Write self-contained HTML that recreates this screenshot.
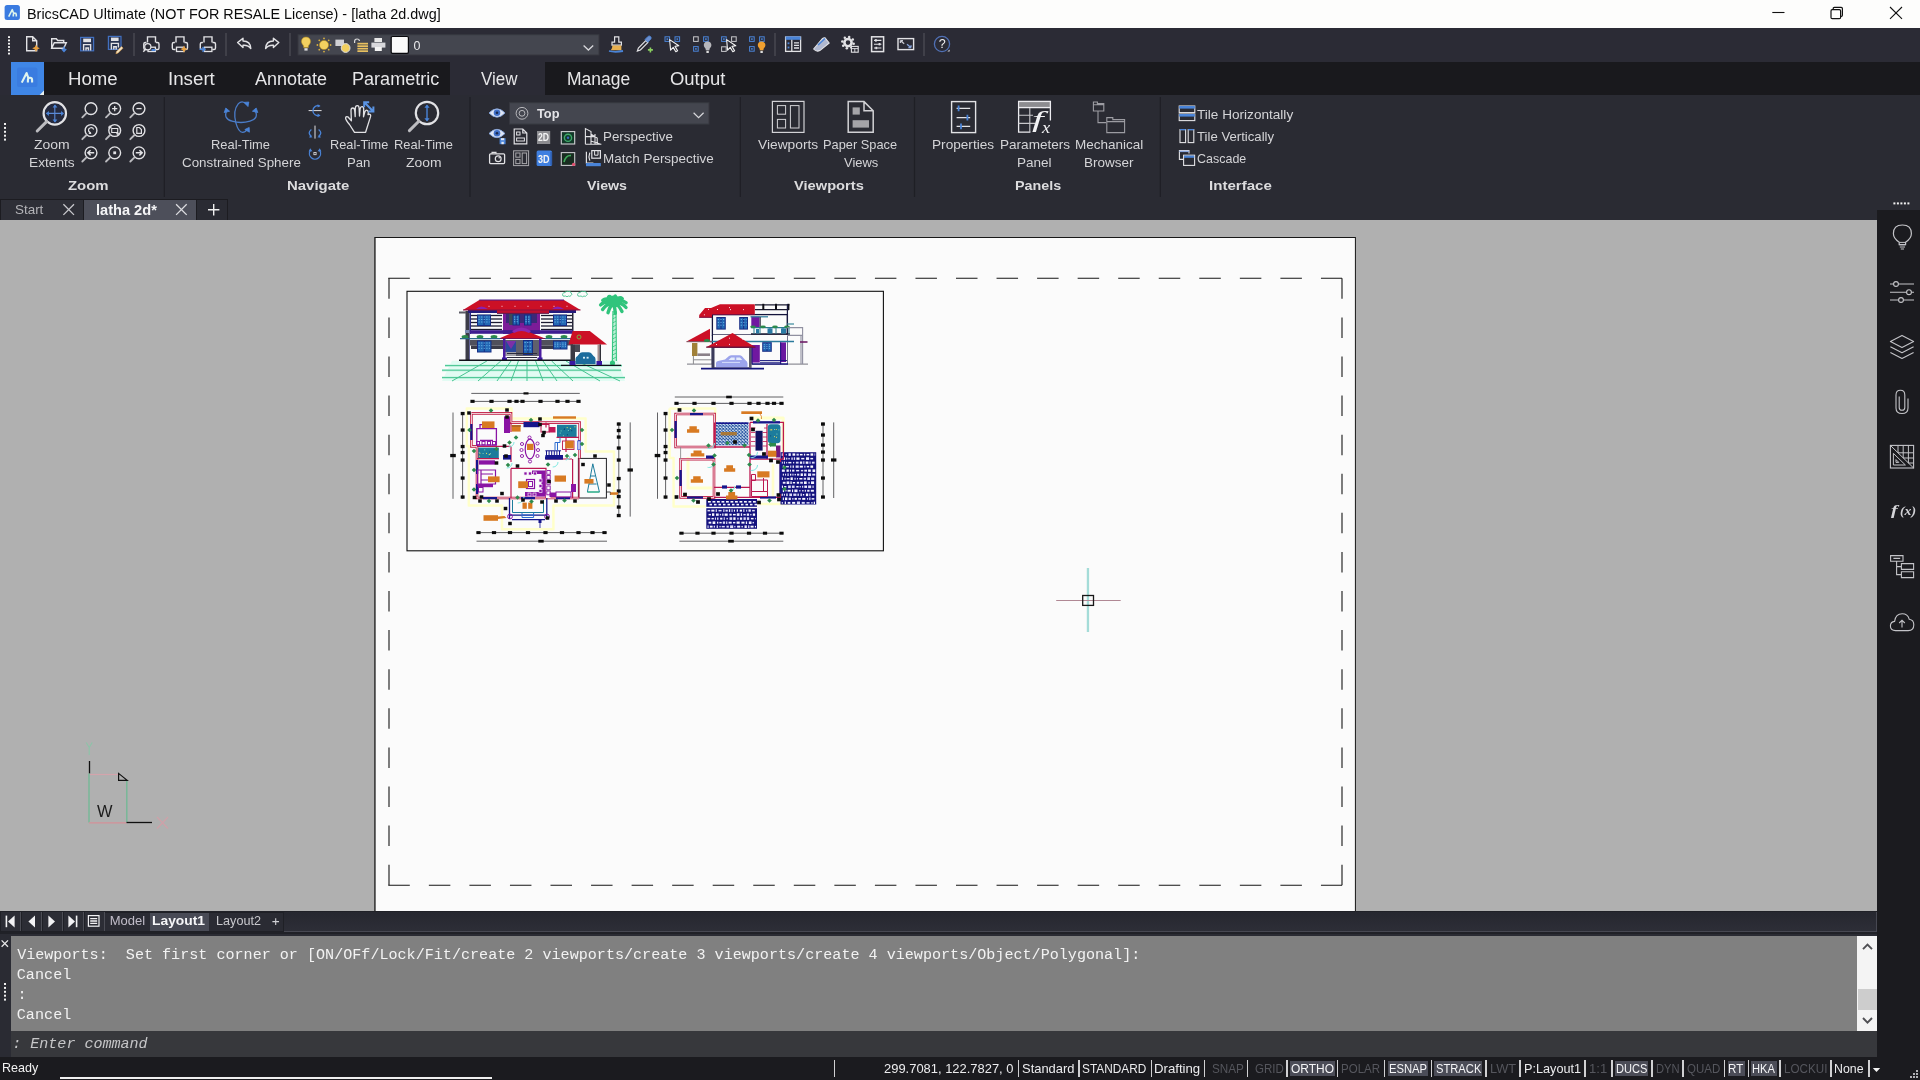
<!DOCTYPE html>
<html>
<head>
<meta charset="utf-8">
<title>BricsCAD Ultimate - latha 2d.dwg</title>
<style>
*{box-sizing:border-box;margin:0;padding:0}
html,body{width:1920px;height:1080px;overflow:hidden;background:#2a2b33;font-family:"Liberation Sans",sans-serif;}
.abs{position:absolute}
.t{position:absolute;white-space:nowrap;display:block}
.ov{position:absolute;left:0;top:0;pointer-events:none}
#titlebar{position:absolute;left:0;top:0;width:1920px;height:28px;background:#fdfdfc;}
#toolbar{position:absolute;left:0;top:28px;width:1920px;height:34px;background:#2b2b35;}
#tabrow{position:absolute;left:0;top:62px;width:1920px;height:34px;background:#2b2b35;}
#tabdark1{position:absolute;left:44px;top:0;width:406px;height:33px;background:#19191d;}
#tabdark2{position:absolute;left:545px;top:0;width:1375px;height:33px;background:#19191d;}
#ribbon{position:absolute;left:0;top:95px;width:1920px;height:105px;background:#2a2b33;}
#doctabs{position:absolute;left:0;top:200px;width:1920px;height:20px;background:#2a2b33;}
#canvas{position:absolute;left:0;top:220px;width:1877px;height:691px;background:#b0b0b0;overflow:hidden}
#rightpanel{position:absolute;left:1877px;top:210px;width:43px;height:870px;background:#1b1b1f;}
#layouttabs{position:absolute;left:0;top:911px;width:1877px;height:21px;background:#2a2b33;}
#cmdpanel{position:absolute;left:0;top:932px;width:1877px;height:125px;background:#2a2b33;}
#cmdhist{position:absolute;left:11px;top:4px;width:1846px;height:95px;background:#808080;}
#cmdscroll{position:absolute;left:1857px;top:4px;width:20px;height:95px;background:#f4f4f4;}
#cmdline{position:absolute;left:11px;top:99px;width:1866px;height:26px;background:#37383c;}
#statusbar{position:absolute;left:0;top:1057px;width:1920px;height:23px;background:#1b1b1f;}
</style>
</head>
<body>
<div id="titlebar"></div>
<div id="toolbar"></div>
<div id="tabrow"><div id="tabdark1"></div><div id="tabdark2"></div></div>
<div id="ribbon"></div>
<div id="doctabs"><div class="abs" style="left:0;top:-1px;width:228px;height:21px;background:#1c1c21"></div><div class="abs" style="left:1px;top:0;width:82px;height:20px;background:#2e2f37"></div><div class="abs" style="left:84px;top:0;width:112px;height:20px;background:#4d4f5a"></div><div class="abs" style="left:197px;top:0;width:30px;height:20px;background:#2a2b33"></div></div>
<div id="canvas"><svg width="1877" height="691" viewBox="0 220 1877 691" style="position:absolute;left:0;top:0"><rect x="374.3" y="237.0" width="981.6" height="675.0" fill="#181818" /><rect x="375.6" y="238.0" width="979.3" height="674.0" fill="#fbfbfb" /><path d="M388.3 278.3 H1342" stroke="#161616" stroke-width="1.1" stroke-dasharray="21.5 19.05" fill="none"/><path d="M388.3 885.2 H1342" stroke="#161616" stroke-width="1.1" stroke-dasharray="21.5 19.05" fill="none"/><path d="M389 278.3 V885.2" stroke="#161616" stroke-width="1.1" stroke-dasharray="20.5 18.59" fill="none"/><path d="M1342 278.3 V885.2" stroke="#161616" stroke-width="1.1" stroke-dasharray="20.5 18.59" fill="none"/><rect x="407.0" y="291.3" width="476.4" height="259.5" fill="none" stroke="#101010" stroke-width="1.1"/><path d="M452 360.800 H618 L625 381 H442z" fill="#e2fbf3"/><g stroke="#c8f4e4" stroke-width="2.6" fill="none"><path d="M445 365.6 H622"/><path d="M442 370.2 H621"/><path d="M442 377.6 H625"/></g><g stroke="#46c490" stroke-width="1" fill="none"><path d="M445 365.6 H622"/><path d="M442 370.2 H621"/><path d="M442 377.6 H625"/><path d="M486.9 361 L452.0 381"/><path d="M500.8 361 L478.0 381"/><path d="M511.0 361 L497.0 381"/><path d="M518.4 361 L511.0 381"/><path d="M527.0 361 L527.0 381"/><path d="M535.6 361 L543.0 381"/><path d="M543.0 361 L557.0 381"/><path d="M551.6 361 L573.0 381"/><path d="M566.0 361 L600.0 381"/><path d="M576.7 361 L620.0 381"/></g><path d="M563 296 q-1.5-3 2-3.500 q1-2 3.500-1 q2.500-.5 2.500 1.500 q2 1 0 2.500 q-1 1.500-2.500 .5 q-1.500 1.500-3 0 q-2 .5-2.500 0z" fill="none" stroke="#46c490" stroke-width="0.9" /><path d="M578 296 q-1.500-3 2-3.500 q1-2 3.500-1 q3-.5 3 1.500 q2 1 0 2.500 q-1 1.500-2.500 .5 q-1.500 1.500-3 0 q-2 .5-3 0z" fill="none" stroke="#46c490" stroke-width="0.9" /><path d="M612.200 311 h4.400 l.6 50 h-5.600z" fill="#bff0d8"/><path d="M613 311 L612.400 361 M616 311 L616.400 361" fill="none" stroke="#30c47c" stroke-width="1" /><path d="M612.6 315.0 L616.2 313.0" stroke="#30c47c" stroke-width="0.8"/><path d="M612.6 319.0 L616.2 317.0" stroke="#30c47c" stroke-width="0.8"/><path d="M612.6 323.0 L616.2 321.0" stroke="#30c47c" stroke-width="0.8"/><path d="M612.6 327.0 L616.2 325.0" stroke="#30c47c" stroke-width="0.8"/><path d="M612.6 331.0 L616.2 329.0" stroke="#30c47c" stroke-width="0.8"/><path d="M612.6 335.0 L616.2 333.0" stroke="#30c47c" stroke-width="0.8"/><path d="M612.6 339.0 L616.2 337.0" stroke="#30c47c" stroke-width="0.8"/><path d="M612.6 343.0 L616.2 341.0" stroke="#30c47c" stroke-width="0.8"/><path d="M612.6 347.0 L616.2 345.0" stroke="#30c47c" stroke-width="0.8"/><path d="M612.6 351.0 L616.2 349.0" stroke="#30c47c" stroke-width="0.8"/><path d="M612.6 355.0 L616.2 353.0" stroke="#30c47c" stroke-width="0.8"/><path d="M612.6 359.0 L616.2 357.0" stroke="#30c47c" stroke-width="0.8"/><circle cx="612.500" cy="363" r="2.600" fill="#30c47c"/><path d="M613.600 303 Q621.2 301.8 626.0 307.5" stroke="#30c47c" stroke-width="3.400" fill="none" stroke-linecap="round"/><path d="M613.600 303 Q618.8 304.6 622.0 311.5" stroke="#30c47c" stroke-width="3.400" fill="none" stroke-linecap="round"/><path d="M613.600 303 Q614.6 306.0 615.3 313.4" stroke="#30c47c" stroke-width="3.400" fill="none" stroke-linecap="round"/><path d="M613.600 303 Q610.2 305.4 608.0 312.7" stroke="#30c47c" stroke-width="3.400" fill="none" stroke-linecap="round"/><path d="M613.600 303 Q606.8 303.2 602.6 309.5" stroke="#30c47c" stroke-width="3.400" fill="none" stroke-linecap="round"/><path d="M613.600 303 Q605.6 299.9 600.6 304.9" stroke="#30c47c" stroke-width="3.400" fill="none" stroke-linecap="round"/><path d="M613.600 303 Q606.9 296.7 602.8 300.3" stroke="#30c47c" stroke-width="3.400" fill="none" stroke-linecap="round"/><path d="M613.600 303 Q610.4 294.5 608.4 297.2" stroke="#30c47c" stroke-width="3.400" fill="none" stroke-linecap="round"/><path d="M613.600 303 Q614.9 294.1 615.6 296.6" stroke="#30c47c" stroke-width="3.400" fill="none" stroke-linecap="round"/><path d="M613.600 303 Q618.9 295.5 622.3 298.7" stroke="#30c47c" stroke-width="3.400" fill="none" stroke-linecap="round"/><path d="M613.600 303 Q621.3 298.4 626.1 302.7" stroke="#30c47c" stroke-width="3.400" fill="none" stroke-linecap="round"/><ellipse cx="613.600" cy="301.500" rx="8" ry="6" fill="#30c47c"/><rect x="466.0" y="312.0" width="107.0" height="22.0" fill="#fbfbfb" /><path d="M470.0 315.5 L502.0 315.5" stroke="#1a1a30" stroke-width="1.3"/><path d="M541.0 315.5 L572.5 315.5" stroke="#1a1a30" stroke-width="1.3"/><path d="M470.0 319.0 L502.0 319.0" stroke="#1a1a30" stroke-width="1.3"/><path d="M541.0 319.0 L572.5 319.0" stroke="#1a1a30" stroke-width="1.3"/><path d="M470.0 322.5 L502.0 322.5" stroke="#1a1a30" stroke-width="1.3"/><path d="M541.0 322.5 L572.5 322.5" stroke="#1a1a30" stroke-width="1.3"/><path d="M470.0 326.0 L502.0 326.0" stroke="#1a1a30" stroke-width="1.3"/><path d="M541.0 326.0 L572.5 326.0" stroke="#1a1a30" stroke-width="1.3"/><path d="M470.0 329.5 L502.0 329.5" stroke="#1a1a30" stroke-width="1.3"/><path d="M541.0 329.5 L572.5 329.5" stroke="#1a1a30" stroke-width="1.3"/><rect x="465.5" y="311.0" width="4.0" height="49.0" fill="#3c3c48" /><rect x="469.5" y="311.0" width="1.5" height="49.0" fill="#2a2a8a" /><rect x="572.0" y="312.0" width="1.5" height="22.0" fill="#28283a" /><rect x="468.0" y="309.5" width="108.0" height="3.5" fill="#241c7c" /><path d="M503 313 h37 v22 h-37z" fill="#7c1c98"/><path d="M506 313 h31 v10 h-31z" fill="#3c2878"/><rect x="509.0" y="313.5" width="6.0" height="11.5" fill="#3a4a58" /><rect x="477.0" y="314.5" width="14.0" height="11.5" fill="#162c84" /><rect x="478.0" y="315.5" width="5.5" height="9.5" fill="#2268b4" /><rect x="484.5" y="315.5" width="5.5" height="9.5" fill="#2268b4" /><path d="M478.5 317.0 H489.5" stroke="#7cc4f4" stroke-width=".8" stroke-dasharray="1.200 1.400"/><path d="M478.5 319.5 H489.5" stroke="#7cc4f4" stroke-width=".8" stroke-dasharray="1.200 1.400"/><path d="M478.5 322.0 H489.5" stroke="#7cc4f4" stroke-width=".8" stroke-dasharray="1.200 1.400"/><rect x="512.5" y="314.5" width="7.5" height="11.0" fill="#162c84" /><rect x="513.5" y="315.5" width="2.2" height="9.0" fill="#2268b4" /><rect x="516.8" y="315.5" width="2.2" height="9.0" fill="#2268b4" /><path d="M514.0 317.0 H518.5" stroke="#7cc4f4" stroke-width=".8" stroke-dasharray="1.200 1.400"/><path d="M514.0 319.3 H518.5" stroke="#7cc4f4" stroke-width=".8" stroke-dasharray="1.200 1.400"/><path d="M514.0 321.7 H518.5" stroke="#7cc4f4" stroke-width=".8" stroke-dasharray="1.200 1.400"/><rect x="524.0" y="314.5" width="7.5" height="11.0" fill="#162c84" /><rect x="525.0" y="315.5" width="2.2" height="9.0" fill="#2268b4" /><rect x="528.2" y="315.5" width="2.2" height="9.0" fill="#2268b4" /><path d="M525.5 317.0 H530.0" stroke="#7cc4f4" stroke-width=".8" stroke-dasharray="1.200 1.400"/><path d="M525.5 319.3 H530.0" stroke="#7cc4f4" stroke-width=".8" stroke-dasharray="1.200 1.400"/><path d="M525.5 321.7 H530.0" stroke="#7cc4f4" stroke-width=".8" stroke-dasharray="1.200 1.400"/><rect x="553.0" y="314.5" width="14.0" height="11.5" fill="#162c84" /><rect x="554.0" y="315.5" width="5.5" height="9.5" fill="#2268b4" /><rect x="560.5" y="315.5" width="5.5" height="9.5" fill="#2268b4" /><path d="M554.5 317.0 H565.5" stroke="#7cc4f4" stroke-width=".8" stroke-dasharray="1.200 1.400"/><path d="M554.5 319.5 H565.5" stroke="#7cc4f4" stroke-width=".8" stroke-dasharray="1.200 1.400"/><path d="M554.5 322.0 H565.5" stroke="#7cc4f4" stroke-width=".8" stroke-dasharray="1.200 1.400"/><rect x="470.0" y="330.2" width="103.0" height="3.6" fill="#3e1c90" /><path d="M479.300 300 H564 L580.500 310 H463z" fill="#cc1026"/><path d="M497 309.500 H549 V313.400 H497z" fill="#c01030"/><path d="M497.0 313.4 L549.0 313.4" stroke="#5a1a4a" stroke-width="0.9"/><path d="M479.3 300.0 L564.0 300.0" stroke="#4a1a8a" stroke-width="1.2"/><path d="M463.0 310.0 L580.5 310.0" stroke="#8a1040" stroke-width="1"/><path d="M476 309 q5-5 12 0z" fill="#8a20b0"/><path d="M552 309 q5-5 12 0z" fill="#8a20b0"/><rect x="488.5" y="305.8" width="1.0" height="1.0" fill="#f8d0e0" /><rect x="501.5" y="305.8" width="1.0" height="1.0" fill="#f8d0e0" /><rect x="514.5" y="305.8" width="1.0" height="1.0" fill="#f8d0e0" /><rect x="527.5" y="305.8" width="1.0" height="1.0" fill="#f8d0e0" /><rect x="540.5" y="305.8" width="1.0" height="1.0" fill="#f8d0e0" /><rect x="553.5" y="305.8" width="1.0" height="1.0" fill="#f8d0e0" /><rect x="566.5" y="305.8" width="1.0" height="1.0" fill="#f8d0e0" /><rect x="470.0" y="334.0" width="103.0" height="26.0" fill="#fbfbfb" /><rect x="470.0" y="340.0" width="103.0" height="5.5" fill="#50505c" /><rect x="471.0" y="345.5" width="32.0" height="3.5" fill="#3c3c48" /><rect x="541.0" y="345.5" width="15.0" height="3.5" fill="#3c3c48" /><rect x="477.0" y="340.5" width="14.5" height="12.0" fill="#162c84" /><rect x="478.0" y="341.5" width="5.8" height="10.0" fill="#2268b4" /><rect x="484.8" y="341.5" width="5.8" height="10.0" fill="#2268b4" /><path d="M478.5 343.0 H490.0" stroke="#7cc4f4" stroke-width=".8" stroke-dasharray="1.200 1.400"/><path d="M478.5 345.7 H490.0" stroke="#7cc4f4" stroke-width=".8" stroke-dasharray="1.200 1.400"/><path d="M478.5 348.3 H490.0" stroke="#7cc4f4" stroke-width=".8" stroke-dasharray="1.200 1.400"/><rect x="553.0" y="340.5" width="14.5" height="9.0" fill="#162c84" /><rect x="554.0" y="341.5" width="5.8" height="7.0" fill="#2268b4" /><rect x="560.8" y="341.5" width="5.8" height="7.0" fill="#2268b4" /><path d="M554.5 343.0 H566.0" stroke="#7cc4f4" stroke-width=".8" stroke-dasharray="1.200 1.400"/><path d="M554.5 344.7 H566.0" stroke="#7cc4f4" stroke-width=".8" stroke-dasharray="1.200 1.400"/><path d="M554.5 346.3 H566.0" stroke="#7cc4f4" stroke-width=".8" stroke-dasharray="1.200 1.400"/><rect x="503.5" y="339.0" width="37.5" height="21.0" fill="#fbfbfb" /><rect x="505.0" y="340.0" width="35.0" height="16.0" fill="#60606c" /><rect x="506.0" y="341.0" width="10.0" height="11.0" fill="#2a4a9c" /><rect x="523.0" y="340.0" width="10.0" height="15.0" fill="#162c84" /><rect x="524.0" y="341.0" width="3.5" height="13.0" fill="#2268b4" /><rect x="528.5" y="341.0" width="3.5" height="13.0" fill="#2268b4" /><path d="M524.5 342.5 H531.5" stroke="#7cc4f4" stroke-width=".8" stroke-dasharray="1.200 1.400"/><path d="M524.5 346.2 H531.5" stroke="#7cc4f4" stroke-width=".8" stroke-dasharray="1.200 1.400"/><path d="M524.5 349.8 H531.5" stroke="#7cc4f4" stroke-width=".8" stroke-dasharray="1.200 1.400"/><rect x="505.0" y="352.0" width="11.0" height="4.0" fill="#a0a0a8" /><path d="M506 341 l5 8 5-8z" fill="#7c30a8"/><rect x="503.0" y="339.0" width="2.5" height="22.0" fill="#4a1ca0" /><rect x="539.0" y="339.0" width="2.5" height="22.0" fill="#4a1ca0" /><rect x="502.0" y="357.5" width="5.0" height="3.5" fill="#3a18a0" /><rect x="537.5" y="357.5" width="5.0" height="3.5" fill="#3a18a0" /><path d="M507.0 353.5 L537.0 353.5" stroke="#2c2c3c" stroke-width="1"/><path d="M507.0 357.5 L537.0 357.5" stroke="#2c2c3c" stroke-width="1"/><path d="M521.500 329 L545 338.500 H499z" fill="#cc1026"/><path d="M512 331 q9.500-7 19 0 l-2 2 q-7.500-4-15 0z" fill="#8c28b0"/><path d="M499.0 338.5 L545.0 338.5" stroke="#7a1450" stroke-width="1.2"/><ellipse cx="465" cy="336.800" rx="3.400" ry="1.900" fill="#2c8a4c"/><ellipse cx="480" cy="336.800" rx="3.400" ry="1.900" fill="#2c8a4c"/><ellipse cx="494" cy="336.800" rx="3.400" ry="1.900" fill="#2c8a4c"/><ellipse cx="549" cy="336.800" rx="3.400" ry="1.900" fill="#2c8a4c"/><ellipse cx="564" cy="336.800" rx="3.400" ry="1.900" fill="#2c8a4c"/><path d="M460.0 338.6 L500.0 338.6" stroke="#2a6a8c" stroke-width="1.2"/><path d="M545.0 338.6 L572.0 338.6" stroke="#2a6a8c" stroke-width="1.2"/><path d="M459.0 360.3 L573.0 360.3" stroke="#101018" stroke-width="1.5"/><path d="M561.0 365.3 L621.0 365.3" stroke="#101018" stroke-width="1.3"/><path d="M572.700 331 H589.800 L607 344.400 H568.500z" fill="#cc1026"/><circle cx="579" cy="337" r="2" fill="none" stroke="#7ab040" stroke-width="1"/><rect x="570.5" y="344.4" width="4.5" height="19.6" fill="#3a3a44" /><rect x="575.0" y="344.4" width="5.0" height="7.6" fill="#4a4a54" /><rect x="597.5" y="344.4" width="2.0" height="19.6" fill="#a89090" /><rect x="599.5" y="344.4" width="1.5" height="19.6" fill="#303038" /><rect x="569.5" y="361.0" width="6.0" height="4.0" fill="#3a18a0" /><rect x="596.5" y="361.0" width="5.5" height="4.0" fill="#3a18a0" /><path d="M575.500 364 v-5 q0-2 2-3 l2.500-3 q1-.8 2.500-.8 h6 q1.500 0 2.500.8 l2.500 3 q2 1 2 3 v5z" fill="#1c6c9c"/><rect x="583.0" y="356.8" width="2.0" height="1.8" fill="#d8ecf4" /><rect x="586.6" y="356.8" width="2.0" height="1.8" fill="#d8ecf4" /><rect x="459.0" y="311.5" width="7.0" height="2.0" fill="#5a5a64" /><rect x="465.0" y="330.0" width="4.0" height="3.0" fill="#7a8ab0" /><path d="M687.0 364.2 L808.0 364.2" stroke="#909098" stroke-width="1.2"/><path d="M701.0 368.6 L764.0 368.6" stroke="#14147c" stroke-width="1.8"/><rect x="712.4" y="314.6" width="75.0" height="20.4" fill="#fbfbfb" stroke="#14143c" stroke-width="1.3"/><path d="M755.0 304.8 L789.5 304.8" stroke="#1a1a30" stroke-width="1.3"/><path d="M755.0 309.6 L789.0 309.6" stroke="#1a1a30" stroke-width="1.3"/><rect x="762.3" y="303.8" width="2.0" height="6.2" fill="#101018" /><rect x="775.0" y="303.8" width="2.0" height="6.2" fill="#101018" /><rect x="787.4" y="303.8" width="2.0" height="6.2" fill="#101018" /><path d="M787.4 304.0 L787.4 364.0" stroke="#1a1a40" stroke-width="1.2"/><path d="M720 304.200 H754.800 V314.600 H712 V317.600 H699.200 V315 L705 308 H711z" fill="#cc1026"/><path d="M712.0 314.6 L754.8 314.6" stroke="#7a1040" stroke-width="1"/><path d="M699.2 317.3 L712.0 317.3" stroke="#7a1040" stroke-width="1"/><rect x="717.0" y="309.0" width="1.0" height="1.0" fill="#f8e0e8" /><rect x="729.0" y="307.1" width="1.0" height="1.0" fill="#f8e0e8" /><rect x="730.0" y="309.1" width="1.0" height="1.0" fill="#f8e0e8" /><rect x="743.0" y="309.1" width="1.0" height="1.0" fill="#f8e0e8" /><rect x="708.0" y="308.9" width="1.0" height="1.0" fill="#f8e0e8" /><rect x="703.9" y="314.3" width="1.0" height="1.0" fill="#f8e0e8" /><rect x="716.3" y="317.0" width="9.5" height="12.6" fill="#162c84" /><rect x="717.3" y="318.0" width="3.2" height="10.6" fill="#2268b4" /><rect x="721.5" y="318.0" width="3.2" height="10.6" fill="#2268b4" /><path d="M717.8 319.5 H724.3" stroke="#7cc4f4" stroke-width=".8" stroke-dasharray="1.200 1.400"/><path d="M717.8 322.4 H724.3" stroke="#7cc4f4" stroke-width=".8" stroke-dasharray="1.200 1.400"/><path d="M717.8 325.2 H724.3" stroke="#7cc4f4" stroke-width=".8" stroke-dasharray="1.200 1.400"/><rect x="739.2" y="317.0" width="8.8" height="12.6" fill="#162c84" /><rect x="740.2" y="318.0" width="2.9" height="10.6" fill="#2268b4" /><rect x="744.1" y="318.0" width="2.9" height="10.6" fill="#2268b4" /><path d="M740.7 319.5 H746.5" stroke="#7cc4f4" stroke-width=".8" stroke-dasharray="1.200 1.400"/><path d="M740.7 322.4 H746.5" stroke="#7cc4f4" stroke-width=".8" stroke-dasharray="1.200 1.400"/><path d="M740.7 325.2 H746.5" stroke="#7cc4f4" stroke-width=".8" stroke-dasharray="1.200 1.400"/><rect x="751.3" y="316.6" width="8.3" height="10.4" fill="#7018a0" /><rect x="750.5" y="316.2" width="17.5" height="1.2" fill="#2a7a9c" /><rect x="759.6" y="317.0" width="1.2" height="10.0" fill="#3a3a4a" /><path d="M751.0 327.6 L790.0 327.6" stroke="#2a7a8c" stroke-width="1.2"/><path d="M751.0 334.0 L790.0 334.0" stroke="#1a1a30" stroke-width="1.6"/><path d="M754.0 327.6 L754.0 334.0" stroke="#2a7a8c" stroke-width="1"/><path d="M760.0 327.6 L760.0 334.0" stroke="#2a7a8c" stroke-width="1"/><path d="M770.0 327.6 L770.0 334.0" stroke="#2a7a8c" stroke-width="1"/><path d="M776.0 327.6 L776.0 334.0" stroke="#2a7a8c" stroke-width="1"/><path d="M783.0 327.6 L783.0 334.0" stroke="#2a7a8c" stroke-width="1"/><path d="M789.0 327.6 L789.0 334.0" stroke="#2a7a8c" stroke-width="1"/><rect x="767.5" y="328.4" width="5.0" height="5.1" fill="#2a7aa4" /><rect x="781.0" y="328.4" width="5.0" height="5.1" fill="#2a7aa4" /><rect x="756.0" y="329.0" width="3.0" height="4.5" fill="#2a7aa4" /><ellipse cx="753" cy="326.800" rx="2.800" ry="1.400" fill="#2c8a4c"/><ellipse cx="763" cy="326.800" rx="2.800" ry="1.400" fill="#2c8a4c"/><ellipse cx="775" cy="326.800" rx="2.800" ry="1.400" fill="#2c8a4c"/><ellipse cx="787" cy="326.800" rx="2.800" ry="1.400" fill="#2c8a4c"/><rect x="787.0" y="323.4" width="7.0" height="1.2" fill="#3a8a9c" /><path d="M787.400 327.600 H802.600 V364 M787.400 335.400 H802.600 M801 335.400 V364" fill="none" stroke="#9090a0" stroke-width="1.1" /><rect x="800.0" y="341.2" width="7.5" height="1.6" fill="#702068" /><rect x="712.4" y="335.0" width="75.0" height="29.0" fill="#fbfbfb" /><path d="M712.4 335.0 L712.4 364.0" stroke="#14143c" stroke-width="1.2"/><path d="M710.0 341.6 L794.0 341.6" stroke="#2a7a9c" stroke-width="1.5"/><rect x="762.2" y="342.2" width="9.6" height="9.6" fill="#162c84" /><rect x="763.2" y="343.2" width="3.3" height="7.6" fill="#2268b4" /><rect x="767.5" y="343.2" width="3.3" height="7.6" fill="#2268b4" /><path d="M763.7 344.7 H770.3" stroke="#7cc4f4" stroke-width=".8" stroke-dasharray="1.200 1.400"/><path d="M763.7 346.6 H770.3" stroke="#7cc4f4" stroke-width=".8" stroke-dasharray="1.200 1.400"/><path d="M763.7 348.4 H770.3" stroke="#7cc4f4" stroke-width=".8" stroke-dasharray="1.200 1.400"/><rect x="751.2" y="345.0" width="8.6" height="17.6" fill="#7018a0" /><rect x="751.2" y="345.0" width="1.6" height="19.0" fill="#3a1890" /><rect x="780.0" y="342.4" width="6.0" height="19.6" fill="#6a18a0" /><rect x="780.0" y="342.4" width="1.2" height="21.6" fill="#2a1888" /><path d="M760.0 360.6 L787.0 360.6" stroke="#14147c" stroke-width="1"/><path d="M752.0 364.0 L788.0 364.0" stroke="#14147c" stroke-width="1.3"/><path d="M760.0 362.4 L780.0 362.4" stroke="#14147c" stroke-width="0.8"/><path d="M686.500 341.400 L710 328.800 V341.400z" fill="#cc1026"/><path d="M686.5 341.6 L712.0 341.6" stroke="#8a5060" stroke-width="1.2"/><rect x="692.0" y="343.0" width="5.4" height="13.0" fill="#a08038" /><rect x="697.4" y="353.4" width="12.6" height="2.6" fill="#8a8088" /><path d="M693.400 356 V364 M693.400 359.800 H712" fill="none" stroke="#8c8c90" stroke-width="1" /><ellipse cx="707" cy="340.600" rx="3" ry="1.500" fill="#2c8a4c"/><rect x="713.0" y="347.2" width="37.5" height="20.8" fill="#fbfbfb" stroke="#1c1c6c" stroke-width="1.4"/><rect x="711.5" y="347.2" width="3.0" height="20.8" fill="#3a3a5a" /><rect x="749.0" y="347.2" width="2.5" height="20.8" fill="#5a5a6a" /><path d="M716 367 v-4 q0-1.600 2-2 l7-1.500 l4-3.500 q1-.8 2.500-.8 h8 q1.500 0 2.500 1 l3 3.500 q2.500 1.500 2.500 3.500 v3.800z" fill="#9ca4ec"/><path d="M728.500 360 l2.600-2.600 h3.600 v2.600z M736.300 357.400 h3.600 l2.400 2.600 h-6z" fill="#e4ecfc"/><path d="M722.0 362.4 L740.0 362.4" stroke="#dce4fc" stroke-width="0.9"/><path d="M732.500 333 L755.500 347.200 H706.200z" fill="#cc1026"/><path d="M706.2 347.2 L755.5 347.2" stroke="#6a1038" stroke-width="1.3"/><rect x="729.0" y="337.7" width="1.0" height="1.0" fill="#f8e0e8" /><rect x="716.0" y="344.0" width="1.0" height="1.0" fill="#f8e0e8" /><rect x="729.0" y="343.9" width="1.0" height="1.0" fill="#f8e0e8" /><rect x="742.5" y="339.0" width="1.0" height="1.0" fill="#f8e0e8" /><path d="M466.800 408.500 H511.600 V418.600 H585.600 V451.400 H614 V505.600 H553.400 V529.200 H502 V505.600 H468.800 V446 H466.800z" fill="none" stroke="#ffffca" stroke-width="2.5" stroke-linejoin="round"/><path d="M471.3 393.4 L579.8 393.4" stroke="#505054" stroke-width="0.9"/><rect x="523.5" y="392.3" width="5.0" height="2.2" fill="#0c0c0c" /><path d="M471.3 401.4 L579.8 401.4" stroke="#505054" stroke-width="0.9"/><rect x="470.4" y="399.8" width="4.2" height="3.1" fill="#0c0c0c" /><rect x="489.4" y="399.8" width="4.2" height="3.1" fill="#0c0c0c" /><rect x="507.4" y="399.8" width="4.2" height="3.1" fill="#0c0c0c" /><rect x="514.4" y="399.8" width="4.2" height="3.1" fill="#0c0c0c" /><rect x="520.4" y="399.8" width="4.2" height="3.1" fill="#0c0c0c" /><rect x="538.4" y="399.8" width="4.2" height="3.1" fill="#0c0c0c" /><rect x="555.4" y="399.8" width="4.2" height="3.1" fill="#0c0c0c" /><rect x="565.4" y="399.8" width="4.2" height="3.1" fill="#0c0c0c" /><rect x="576.4" y="399.8" width="4.2" height="3.1" fill="#0c0c0c" /><path d="M453.0 412.5 L453.0 498.8" stroke="#505054" stroke-width="0.9"/><rect x="450.2" y="453.9" width="5.6" height="3.3" fill="#0c0c0c" /><path d="M462.6 412.5 L462.6 498.8" stroke="#505054" stroke-width="0.9"/><rect x="460.7" y="411.9" width="3.9" height="3.3" fill="#0c0c0c" /><rect x="460.7" y="428.4" width="3.9" height="3.3" fill="#0c0c0c" /><rect x="460.7" y="444.9" width="3.9" height="3.3" fill="#0c0c0c" /><rect x="460.7" y="450.9" width="3.9" height="3.3" fill="#0c0c0c" /><rect x="460.7" y="458.4" width="3.9" height="3.3" fill="#0c0c0c" /><rect x="460.7" y="476.4" width="3.9" height="3.3" fill="#0c0c0c" /><rect x="460.7" y="495.4" width="3.9" height="3.3" fill="#0c0c0c" /><path d="M618.8 422.4 L618.8 516.4" stroke="#505054" stroke-width="0.9"/><rect x="616.8" y="422.4" width="3.9" height="3.3" fill="#0c0c0c" /><rect x="616.8" y="428.9" width="3.9" height="3.3" fill="#0c0c0c" /><rect x="616.8" y="435.4" width="3.9" height="3.3" fill="#0c0c0c" /><rect x="616.8" y="446.4" width="3.9" height="3.3" fill="#0c0c0c" /><rect x="616.8" y="458.4" width="3.9" height="3.3" fill="#0c0c0c" /><rect x="616.8" y="476.9" width="3.9" height="3.3" fill="#0c0c0c" /><rect x="616.8" y="489.4" width="3.9" height="3.3" fill="#0c0c0c" /><rect x="616.8" y="494.9" width="3.9" height="3.3" fill="#0c0c0c" /><rect x="616.8" y="505.4" width="3.9" height="3.3" fill="#0c0c0c" /><rect x="616.8" y="513.9" width="3.9" height="3.3" fill="#0c0c0c" /><path d="M630.2 422.4 L630.2 516.6" stroke="#505054" stroke-width="0.9"/><rect x="627.5" y="468.4" width="5.4" height="3.2" fill="#0c0c0c" /><path d="M476.7 532.6 L606.5 532.6" stroke="#505054" stroke-width="0.9"/><rect x="476.4" y="531.1" width="4.2" height="3.0" fill="#0c0c0c" /><rect x="491.9" y="531.1" width="4.2" height="3.0" fill="#0c0c0c" /><rect x="507.9" y="531.1" width="4.2" height="3.0" fill="#0c0c0c" /><rect x="525.9" y="531.1" width="4.2" height="3.0" fill="#0c0c0c" /><rect x="543.4" y="531.1" width="4.2" height="3.0" fill="#0c0c0c" /><rect x="559.9" y="531.1" width="4.2" height="3.0" fill="#0c0c0c" /><rect x="576.4" y="531.1" width="4.2" height="3.0" fill="#0c0c0c" /><rect x="590.4" y="531.1" width="4.2" height="3.0" fill="#0c0c0c" /><rect x="602.4" y="531.1" width="4.2" height="3.0" fill="#0c0c0c" /><path d="M476.5 541.2 L607.0 541.2" stroke="#505054" stroke-width="0.9"/><rect x="538.3" y="539.8" width="5.4" height="2.8" fill="#0c0c0c" /><rect x="578.4" y="458.4" width="28.0" height="39.6" fill="none" stroke="#202024" stroke-width="1"/><path d="M606.400 492 l4 0 0 3" fill="none" stroke="#141414" stroke-width="0.8" /><rect x="477.6" y="447.6" width="21.2" height="10.6" fill="#1c7c9c" /><rect x="557.0" y="424.8" width="19.6" height="12.2" fill="#1c7c9c" /><rect x="484.2" y="449.4" width="1.0" height="1.0" fill="#7cd0c0" /><rect x="479.4" y="452.8" width="1.0" height="1.0" fill="#e0e060" /><rect x="489.1" y="456.2" width="1.0" height="1.0" fill="#14508c" /><rect x="478.7" y="451.9" width="1.0" height="1.0" fill="#7cd0c0" /><rect x="482.6" y="453.0" width="1.0" height="1.0" fill="#7cd0c0" /><rect x="493.7" y="449.1" width="1.0" height="1.0" fill="#14508c" /><rect x="490.0" y="453.2" width="1.0" height="1.0" fill="#7cd0c0" /><rect x="489.0" y="451.6" width="1.0" height="1.0" fill="#14508c" /><rect x="478.9" y="455.7" width="1.0" height="1.0" fill="#e0e060" /><rect x="486.0" y="452.9" width="1.0" height="1.0" fill="#e0e060" /><rect x="488.6" y="454.1" width="1.0" height="1.0" fill="#7cd0c0" /><rect x="489.1" y="453.8" width="1.0" height="1.0" fill="#e0e060" /><rect x="559.7" y="432.6" width="1.0" height="1.0" fill="#7cd0c0" /><rect x="568.5" y="430.5" width="1.0" height="1.0" fill="#0c3c6c" /><rect x="571.2" y="430.2" width="1.0" height="1.0" fill="#0c3c6c" /><rect x="564.1" y="428.0" width="1.0" height="1.0" fill="#14508c" /><rect x="569.9" y="427.9" width="1.0" height="1.0" fill="#e0e060" /><rect x="566.9" y="434.3" width="1.0" height="1.0" fill="#0c3c6c" /><rect x="562.9" y="435.3" width="1.0" height="1.0" fill="#7cd0c0" /><rect x="566.7" y="427.1" width="1.0" height="1.0" fill="#e0e060" /><rect x="560.6" y="430.4" width="1.0" height="1.0" fill="#7cd0c0" /><rect x="574.4" y="426.3" width="1.0" height="1.0" fill="#e0e060" /><rect x="563.8" y="429.0" width="1.0" height="1.0" fill="#0c3c6c" /><rect x="567.9" y="430.1" width="1.0" height="1.0" fill="#7cd0c0" /><path d="M471.400 413.400 H511 V422.600 H579.600 V458.400 M471.400 413.400 V446.400 H477 V498 H579 " fill="none" stroke="#c01c44" stroke-width="2.6" /><path d="M471.400 413.400 H511 V422.600 H579.600 V458.400 M471.400 413.400 V446.400 H477 V498 H579 " fill="none" stroke="#fbf4f6" stroke-width="0.9000000000000001" /><path d="M511 422.600 V432 M511 446.400 V462 M477 446.400 H511 M477 458.600 H499 M511 468.400 H546 V498 M511 468.400 V498 M546 459 H572 M572.600 459 V498 M579 458.400 V498 M546 422.600 V427.500 M556.500 437.400 H579 M566 437.400 V452 M546 458.500 H556" fill="none" stroke="#bc1850" stroke-width="1.2" /><rect x="523.5" y="422.0" width="16.0" height="5.2" fill="#16168c" /><rect x="470.3" y="424.0" width="2.2" height="16.0" fill="#16168c" /><rect x="476.0" y="460.0" width="2.2" height="14.0" fill="#16168c" /><rect x="476.0" y="484.0" width="2.2" height="10.0" fill="#16168c" /><rect x="483.0" y="497.0" width="14.0" height="2.2" fill="#16168c" /><rect x="521.0" y="497.0" width="14.0" height="2.2" fill="#16168c" /><rect x="556.0" y="497.0" width="14.0" height="2.2" fill="#16168c" /><rect x="578.0" y="440.0" width="2.2" height="10.0" fill="#16168c" /><rect x="503.0" y="455.0" width="8.0" height="4.6" fill="#16168c" /><rect x="545.0" y="456.5" width="18.0" height="3.1" fill="#16168c" /><rect x="504.0" y="416.4" width="6.0" height="16.6" fill="#8a14a4" /><path d="M476.800 428.600 h19.600 v16.600 h-19.600z M480 428.600 v-4 h13 v4 M480 440.500 h13" fill="none" stroke="#8a14a4" stroke-width="1.3" /><rect x="476.5" y="441.5" width="3.0" height="3.3" fill="none" stroke="#8a14a4" stroke-width="1"/><rect x="482.0" y="441.5" width="3.0" height="3.3" fill="none" stroke="#8a14a4" stroke-width="1"/><rect x="487.5" y="441.5" width="3.0" height="3.3" fill="none" stroke="#8a14a4" stroke-width="1"/><rect x="492.5" y="441.5" width="3.0" height="3.3" fill="none" stroke="#8a14a4" stroke-width="1"/><rect x="479.0" y="460.3" width="16.0" height="4.3" fill="#8a14a4" /><path d="M477.500 470 h18 v14 h-18z M481 470 v14 M481 474 h12 M481 480 h12" fill="none" stroke="#8a14a4" stroke-width="1.2" /><rect x="477.5" y="484.0" width="15.5" height="3.2" fill="#8a14a4" /><rect x="478.5" y="487.5" width="4.5" height="4.5" fill="none" stroke="#8a14a4" stroke-width="1"/><rect x="532.0" y="470.5" width="13.6" height="3.5" fill="#8a14a4" /><rect x="541.5" y="474.0" width="4.1" height="20.0" fill="#8a14a4" /><rect x="525.0" y="492.0" width="20.6" height="4.5" fill="#8a14a4" /><rect x="524.0" y="472.0" width="3.0" height="3.0" fill="#8a14a4" stroke="#f4e8f8" stroke-width="0.7"/><rect x="528.5" y="472.0" width="3.0" height="3.0" fill="#8a14a4" stroke="#f4e8f8" stroke-width="0.7"/><rect x="533.5" y="472.0" width="3.0" height="3.0" fill="#8a14a4" stroke="#f4e8f8" stroke-width="0.7"/><rect x="539.0" y="479.0" width="3.0" height="3.0" fill="#8a14a4" stroke="#f4e8f8" stroke-width="0.7"/><rect x="539.0" y="484.5" width="3.0" height="3.0" fill="#8a14a4" stroke="#f4e8f8" stroke-width="0.7"/><rect x="539.0" y="489.5" width="3.0" height="3.0" fill="#8a14a4" stroke="#f4e8f8" stroke-width="0.7"/><rect x="528.0" y="493.0" width="3.0" height="3.0" fill="#8a14a4" stroke="#f4e8f8" stroke-width="0.7"/><rect x="533.0" y="493.0" width="3.0" height="3.0" fill="#8a14a4" stroke="#f4e8f8" stroke-width="0.7"/><rect x="526.5" y="479.5" width="8.0" height="9.0" fill="none" stroke="#8a14a4" stroke-width="1.2"/><rect x="528.5" y="481.5" width="4.0" height="5.0" fill="none" stroke="#8a14a4" stroke-width="1"/><rect x="546.0" y="470.0" width="4.5" height="28.0" fill="#fbfbfb" /><rect x="546.8" y="470.5" width="3.4" height="3.8" fill="none" stroke="#8a14a4" stroke-width="0.9"/><rect x="546.8" y="475.5" width="3.4" height="3.8" fill="none" stroke="#8a14a4" stroke-width="0.9"/><rect x="546.8" y="480.5" width="3.4" height="3.8" fill="none" stroke="#8a14a4" stroke-width="0.9"/><rect x="546.8" y="486.0" width="3.4" height="3.8" fill="none" stroke="#8a14a4" stroke-width="0.9"/><rect x="546.8" y="491.0" width="3.4" height="3.8" fill="none" stroke="#8a14a4" stroke-width="0.9"/><rect x="571.0" y="484.0" width="5.0" height="8.0" fill="#8a14a4" /><rect x="549.5" y="492.5" width="6.5" height="4.5" fill="#8a14a4" /><rect x="556.0" y="492.0" width="15.0" height="5.0" fill="none" stroke="#8a14a4" stroke-width="1"/><rect x="549.0" y="427.0" width="6.5" height="5.5" fill="#c01858" /><rect x="541.0" y="424.5" width="8.0" height="7.5" fill="none" stroke="#bc1850" stroke-width="1"/><ellipse cx="530" cy="449" rx="4.800" ry="9.800" fill="none" stroke="#8a14a4" stroke-width="1.200"/><ellipse cx="522" cy="444" rx="1.600" ry="1.500" fill="none" stroke="#8a14a4" stroke-width=".9"/><ellipse cx="521.5" cy="450" rx="1.600" ry="1.500" fill="none" stroke="#8a14a4" stroke-width=".9"/><ellipse cx="522" cy="456" rx="1.600" ry="1.500" fill="none" stroke="#8a14a4" stroke-width=".9"/><ellipse cx="537.5" cy="443.5" rx="1.600" ry="1.500" fill="none" stroke="#8a14a4" stroke-width=".9"/><ellipse cx="538" cy="450" rx="1.600" ry="1.500" fill="none" stroke="#8a14a4" stroke-width=".9"/><ellipse cx="537.5" cy="456" rx="1.600" ry="1.500" fill="none" stroke="#8a14a4" stroke-width=".9"/><ellipse cx="529.5" cy="437.5" rx="1.600" ry="1.500" fill="none" stroke="#8a14a4" stroke-width=".9"/><ellipse cx="530" cy="461.5" rx="1.600" ry="1.500" fill="none" stroke="#8a14a4" stroke-width=".9"/><rect x="545.4" y="455.0" width="17.6" height="3.6" fill="#16168c" /><path d="M546.5 450.8 L546.5 455.0" stroke="#16168c" stroke-width="1"/><path d="M549.1 450.8 L549.1 455.0" stroke="#16168c" stroke-width="1"/><path d="M551.7 450.8 L551.7 455.0" stroke="#16168c" stroke-width="1"/><path d="M554.3 450.8 L554.3 455.0" stroke="#16168c" stroke-width="1"/><path d="M556.9 450.8 L556.9 455.0" stroke="#16168c" stroke-width="1"/><path d="M559.5 450.8 L559.5 455.0" stroke="#16168c" stroke-width="1"/><path d="M545.4 450.8 L561.0 450.8" stroke="#16168c" stroke-width="1"/><path d="M555 450.500 v-8 h5 v-5 M557.500 442.500 v8" fill="none" stroke="#2c6cd0" stroke-width="1" /><rect x="562.5" y="441.0" width="11.5" height="8.5" fill="none" stroke="#bc1850" stroke-width="0.9"/><rect x="577.5" y="441.0" width="3.0" height="8.5" fill="#b8c0f0" stroke="#6a7ae0" stroke-width="0.9"/><circle cx="509" cy="442" r="5" fill="none" stroke="#80e8e0" stroke-width="1" stroke-dasharray="8.0 25.0"/><circle cx="507" cy="463" r="5" fill="none" stroke="#80e8e0" stroke-width="1" stroke-dasharray="8.0 25.0"/><circle cx="553" cy="462" r="5" fill="none" stroke="#80e8e0" stroke-width="1" stroke-dasharray="8.0 25.0"/><circle cx="518" cy="497" r="6" fill="none" stroke="#80e8e0" stroke-width="1" stroke-dasharray="9.6 30.0"/><circle cx="566" cy="456" r="4" fill="none" stroke="#80e8e0" stroke-width="1" stroke-dasharray="6.4 20.0"/><path d="M509.500 498 V519 M546.800 498 V519 M509.500 515.200 H546.800 M512 519.600 H545" fill="none" stroke="#16168c" stroke-width="1.3" /><path d="M512.500 500 V512.500 H543.500 V500" fill="none" stroke="#1c7c9c" stroke-width="1" /><path d="M522 512.500 v5 h11.600 v-5 M522 515 h11.600" fill="none" stroke="#2c6cd0" stroke-width="1" /><circle cx="510" cy="516.5" r="2.400" fill="none" stroke="#8a14a4" stroke-width="1"/><circle cx="547" cy="516.5" r="2.400" fill="none" stroke="#8a14a4" stroke-width="1"/><path d="M499.500 529.400 H553.500 V505.600" fill="none" stroke="#ffffca" stroke-width="0" /><rect x="538.5" y="519.0" width="3.0" height="4.0" fill="#16168c" /><path d="M540.0 523.0 L540.0 528.0" stroke="#16168c" stroke-width="0.8"/><path d="M592.800 463.800 L587.400 492 H599.400z M590.500 476 h4.600 M589 484 h7.600" fill="none" stroke="#1c7c9c" stroke-width="1" /><path d="M587.400 492 h12" fill="none" stroke="#3cc088" stroke-width="1.2" /><rect x="482.0" y="421.4" width="12.5" height="6.6" fill="#d87a22" /><rect x="511.8" y="425.0" width="8.8" height="6.6" fill="#d87a22" /><rect x="553.0" y="416.3" width="23.0" height="2.4" fill="#d87a22" /><rect x="527.0" y="443.8" width="6.5" height="6.2" fill="#d87a22" /><rect x="565.3" y="440.8" width="8.4" height="7.6" fill="#d87a22" /><rect x="488.0" y="476.4" width="11.6" height="5.8" fill="#d87a22" /><rect x="518.2" y="481.3" width="9.8" height="6.8" fill="#d87a22" /><rect x="554.6" y="475.5" width="11.4" height="6.2" fill="#d87a22" /><rect x="584.4" y="479.0" width="9.1" height="4.6" fill="#d87a22" /><rect x="522.5" y="502.6" width="4.3" height="6.2" fill="#d87a22" /><rect x="528.2" y="502.6" width="4.2" height="6.2" fill="#d87a22" /><rect x="483.5" y="515.2" width="14.5" height="5.6" fill="#d87a22" /><rect x="610.4" y="492.3" width="7.6" height="2.5" fill="#d87a22" /><path d="M498 516.500 l6.500-.4 2 2 -8.500 1z" fill="#d87a22"/><rect x="511.8" y="425.0" width="8.8" height="2.0" fill="#b06828" /><rect x="467.2" y="411.3" width="3.6" height="3.4" fill="#0c0c0c" /><rect x="505.2" y="408.3" width="3.6" height="3.4" fill="#0c0c0c" /><rect x="505.2" y="415.3" width="3.6" height="3.4" fill="#0c0c0c" /><rect x="538.2" y="417.3" width="3.6" height="3.4" fill="#0c0c0c" /><rect x="538.2" y="422.8" width="3.6" height="3.4" fill="#0c0c0c" /><rect x="542.2" y="430.8" width="3.6" height="3.4" fill="#0c0c0c" /><rect x="502.7" y="444.3" width="3.6" height="3.4" fill="#0c0c0c" /><rect x="504.2" y="454.3" width="3.6" height="3.4" fill="#0c0c0c" /><rect x="515.7" y="464.3" width="3.6" height="3.4" fill="#0c0c0c" /><rect x="494.7" y="461.3" width="3.6" height="3.4" fill="#0c0c0c" /><rect x="500.2" y="491.8" width="3.6" height="3.4" fill="#0c0c0c" /><rect x="472.7" y="495.8" width="3.6" height="3.4" fill="#0c0c0c" /><rect x="478.2" y="499.3" width="3.6" height="3.4" fill="#0c0c0c" /><rect x="495.2" y="499.3" width="3.6" height="3.4" fill="#0c0c0c" /><rect x="521.2" y="498.3" width="3.6" height="3.4" fill="#0c0c0c" /><rect x="540.2" y="500.3" width="3.6" height="3.4" fill="#0c0c0c" /><rect x="554.2" y="499.3" width="3.6" height="3.4" fill="#0c0c0c" /><rect x="573.2" y="499.3" width="3.6" height="3.4" fill="#0c0c0c" /><rect x="503.7" y="506.8" width="3.6" height="3.4" fill="#0c0c0c" /><rect x="508.2" y="521.8" width="3.6" height="3.4" fill="#0c0c0c" /><rect x="545.7" y="516.3" width="3.6" height="3.4" fill="#0c0c0c" /><rect x="581.2" y="462.8" width="3.6" height="3.4" fill="#0c0c0c" /><rect x="593.2" y="454.3" width="3.6" height="3.4" fill="#0c0c0c" /><rect x="607.2" y="483.3" width="3.6" height="3.4" fill="#0c0c0c" /><rect x="547.2" y="479.8" width="3.6" height="3.4" fill="#0c0c0c" /><rect x="541.2" y="433.8" width="3.6" height="3.4" fill="#0c0c0c" /><rect x="479.7" y="495.3" width="3.6" height="3.4" fill="#0c0c0c" /><path d="M491 408.2 l2.300 2.300 -2.300 2.300 -2.300-2.300z" fill="#2c8a4c"/><path d="M469.5 427.7 l2.300 2.300 -2.300 2.300 -2.300-2.300z" fill="#2c8a4c"/><path d="M474 448.7 l2.300 2.300 -2.300 2.300 -2.300-2.300z" fill="#2c8a4c"/><path d="M474 467.7 l2.300 2.300 -2.300 2.300 -2.300-2.300z" fill="#2c8a4c"/><path d="M474 487.2 l2.300 2.300 -2.300 2.300 -2.300-2.300z" fill="#2c8a4c"/><path d="M489 498.7 l2.300 2.300 -2.300 2.300 -2.300-2.300z" fill="#2c8a4c"/><path d="M517.5 495.2 l2.300 2.300 -2.300 2.300 -2.300-2.300z" fill="#2c8a4c"/><path d="M531 417.7 l2.300 2.300 -2.300 2.300 -2.300-2.300z" fill="#2c8a4c"/><path d="M531.5 499.2 l2.300 2.300 -2.300 2.300 -2.300-2.300z" fill="#2c8a4c"/><path d="M564.5 498.2 l2.300 2.300 -2.300 2.300 -2.300-2.300z" fill="#2c8a4c"/><path d="M582 427.7 l2.300 2.300 -2.300 2.300 -2.300-2.300z" fill="#2c8a4c"/><path d="M582 441.7 l2.300 2.300 -2.300 2.300 -2.300-2.300z" fill="#2c8a4c"/><path d="M516 435.2 l2.300 2.300 -2.300 2.300 -2.300-2.300z" fill="#2c8a4c"/><path d="M509.5 440.2 l2.300 2.300 -2.300 2.300 -2.300-2.300z" fill="#2c8a4c"/><path d="M508 462.7 l2.300 2.300 -2.300 2.300 -2.300-2.300z" fill="#2c8a4c"/><path d="M548 462.2 l2.300 2.300 -2.300 2.300 -2.300-2.300z" fill="#2c8a4c"/><path d="M567 453.7 l2.300 2.300 -2.300 2.300 -2.300-2.300z" fill="#2c8a4c"/><path d="M575 452.7 l2.300 2.300 -2.300 2.300 -2.300-2.300z" fill="#2c8a4c"/><path d="M496.5 446.7 l2.300 2.300 -2.300 2.300 -2.300-2.300z" fill="#2c8a4c"/><path d="M669.600 408.400 H715.200 V421 M669.600 408.400 V458 H673.600 V506.500 H706" fill="none" stroke="#ffffca" stroke-width="2.5" stroke-linejoin="round"/><path d="M750.600 418 H783.200 V452" fill="none" stroke="#ffffca" stroke-width="3" stroke-linejoin="round"/><path d="M688 457 V488 H712" fill="none" stroke="#ffffca" stroke-width="3" /><path d="M773 464 V497 M757 504 H789" fill="none" stroke="#ffffca" stroke-width="2.6" /><path d="M674.8 397.0 L783.3 397.0" stroke="#505054" stroke-width="0.9"/><rect x="726.2" y="395.7" width="5.6" height="2.6" fill="#0c0c0c" /><path d="M675.0 403.4 L783.3 403.4" stroke="#505054" stroke-width="0.9"/><rect x="674.4" y="401.8" width="4.2" height="3.1" fill="#0c0c0c" /><rect x="692.4" y="401.8" width="4.2" height="3.1" fill="#0c0c0c" /><rect x="711.4" y="401.8" width="4.2" height="3.1" fill="#0c0c0c" /><rect x="729.4" y="401.8" width="4.2" height="3.1" fill="#0c0c0c" /><rect x="747.4" y="401.8" width="4.2" height="3.1" fill="#0c0c0c" /><rect x="756.4" y="401.8" width="4.2" height="3.1" fill="#0c0c0c" /><rect x="765.4" y="401.8" width="4.2" height="3.1" fill="#0c0c0c" /><rect x="771.9" y="401.8" width="4.2" height="3.1" fill="#0c0c0c" /><rect x="779.4" y="401.8" width="4.2" height="3.1" fill="#0c0c0c" /><path d="M657.5 412.5 L657.5 498.8" stroke="#505054" stroke-width="0.9"/><rect x="654.7" y="453.9" width="5.6" height="3.3" fill="#0c0c0c" /><path d="M665.6 412.5 L665.6 498.8" stroke="#505054" stroke-width="0.9"/><rect x="663.6" y="411.9" width="3.9" height="3.3" fill="#0c0c0c" /><rect x="663.6" y="428.4" width="3.9" height="3.3" fill="#0c0c0c" /><rect x="663.6" y="444.9" width="3.9" height="3.3" fill="#0c0c0c" /><rect x="663.6" y="450.9" width="3.9" height="3.3" fill="#0c0c0c" /><rect x="663.6" y="458.4" width="3.9" height="3.3" fill="#0c0c0c" /><rect x="663.6" y="476.4" width="3.9" height="3.3" fill="#0c0c0c" /><rect x="663.6" y="495.4" width="3.9" height="3.3" fill="#0c0c0c" /><path d="M823.0 422.4 L823.0 498.0" stroke="#505054" stroke-width="0.9"/><rect x="821.0" y="422.4" width="3.9" height="3.3" fill="#0c0c0c" /><rect x="821.0" y="433.4" width="3.9" height="3.3" fill="#0c0c0c" /><rect x="821.0" y="443.4" width="3.9" height="3.3" fill="#0c0c0c" /><rect x="821.0" y="450.4" width="3.9" height="3.3" fill="#0c0c0c" /><rect x="821.0" y="458.4" width="3.9" height="3.3" fill="#0c0c0c" /><rect x="821.0" y="476.4" width="3.9" height="3.3" fill="#0c0c0c" /><rect x="821.0" y="495.4" width="3.9" height="3.3" fill="#0c0c0c" /><path d="M833.7 422.4 L833.7 498.0" stroke="#505054" stroke-width="0.9"/><rect x="831.0" y="458.4" width="5.4" height="3.2" fill="#0c0c0c" /><path d="M679.4 533.2 L783.3 533.2" stroke="#505054" stroke-width="0.9"/><rect x="679.4" y="531.7" width="4.2" height="3.0" fill="#0c0c0c" /><rect x="695.4" y="531.7" width="4.2" height="3.0" fill="#0c0c0c" /><rect x="711.4" y="531.7" width="4.2" height="3.0" fill="#0c0c0c" /><rect x="729.4" y="531.7" width="4.2" height="3.0" fill="#0c0c0c" /><rect x="746.9" y="531.7" width="4.2" height="3.0" fill="#0c0c0c" /><rect x="762.9" y="531.7" width="4.2" height="3.0" fill="#0c0c0c" /><rect x="779.4" y="531.7" width="4.2" height="3.0" fill="#0c0c0c" /><path d="M679.4 541.2 L783.3 541.2" stroke="#505054" stroke-width="0.9"/><rect x="728.2" y="539.8" width="5.6" height="2.8" fill="#0c0c0c" /><defs><pattern id="hx" width="3.200" height="3.200" patternUnits="userSpaceOnUse"><rect width="3.200" height="3.200" fill="#e8f4fc"/><path d="M0 0 L3.200 3.200 M3.200 0 L0 3.200" stroke="#1c4c9c" stroke-width=".9"/></pattern></defs><rect x="715.4" y="422.4" width="33.0" height="23.0" fill="url(#hx)" /><rect x="715.4" y="422.4" width="33.0" height="1.6" fill="#16168c" /><rect x="780.5" y="452.2" width="35.7" height="52.3" fill="#14127e" /><rect x="781.7" y="453.3" width="2.3" height="2.6" fill="#dcdcf8" /><rect x="785.7" y="453.9" width="1.1" height="1.5" fill="#dcdcf8" /><rect x="788.5" y="453.3" width="2.3" height="2.6" fill="#f0f0ff" /><rect x="792.5" y="453.4" width="2.7" height="2.3" fill="#fafaff" /><rect x="796.5" y="453.7" width="2.3" height="1.9" fill="#dcdcf8" /><rect x="799.9" y="453.9" width="2.7" height="1.5" fill="#fafaff" /><rect x="803.9" y="453.7" width="1.3" height="1.9" fill="#f0f0ff" /><rect x="806.5" y="453.9" width="2.7" height="1.5" fill="#fafaff" /><rect x="810.5" y="453.4" width="2.7" height="2.3" fill="#fafaff" /><rect x="814.5" y="453.4" width="0.7" height="2.3" fill="#dcdcf8" /><rect x="782.8" y="457.3" width="2.3" height="2.6" fill="#fafaff" /><rect x="786.2" y="457.7" width="1.1" height="1.9" fill="#fafaff" /><rect x="788.4" y="457.9" width="1.3" height="1.5" fill="#f0f0ff" /><rect x="791.4" y="457.5" width="1.3" height="2.3" fill="#f0f0ff" /><rect x="793.8" y="457.3" width="1.3" height="2.6" fill="#dcdcf8" /><rect x="796.4" y="457.5" width="3.1" height="2.3" fill="#fafaff" /><rect x="801.2" y="457.9" width="3.1" height="1.5" fill="#f0f0ff" /><rect x="806.0" y="457.3" width="3.1" height="2.6" fill="#f0f0ff" /><rect x="810.4" y="457.9" width="2.7" height="1.5" fill="#f0f0ff" /><rect x="781.7" y="461.7" width="1.1" height="1.9" fill="#f0f0ff" /><rect x="783.9" y="461.5" width="1.1" height="2.3" fill="#dcdcf8" /><rect x="786.1" y="461.9" width="1.1" height="1.5" fill="#dcdcf8" /><rect x="788.3" y="461.9" width="3.1" height="1.5" fill="#f0f0ff" /><rect x="793.1" y="461.9" width="1.1" height="1.5" fill="#fafaff" /><rect x="795.9" y="461.7" width="2.7" height="1.9" fill="#dcdcf8" /><rect x="799.9" y="461.5" width="2.3" height="2.3" fill="#f0f0ff" /><rect x="803.3" y="461.3" width="1.1" height="2.6" fill="#f0f0ff" /><rect x="805.7" y="461.5" width="2.7" height="2.3" fill="#fafaff" /><rect x="809.5" y="461.5" width="1.1" height="2.3" fill="#dcdcf8" /><rect x="811.9" y="461.7" width="2.7" height="1.9" fill="#dcdcf8" /><rect x="782.8" y="465.5" width="1.3" height="2.3" fill="#fafaff" /><rect x="785.8" y="465.9" width="3.1" height="1.5" fill="#dcdcf8" /><rect x="790.2" y="465.5" width="1.1" height="2.3" fill="#dcdcf8" /><rect x="792.6" y="465.5" width="1.3" height="2.3" fill="#fafaff" /><rect x="795.6" y="465.5" width="3.1" height="2.3" fill="#dcdcf8" /><rect x="799.8" y="465.7" width="3.1" height="1.9" fill="#fafaff" /><rect x="804.2" y="465.7" width="1.3" height="1.9" fill="#dcdcf8" /><rect x="806.8" y="465.9" width="2.3" height="1.5" fill="#fafaff" /><rect x="810.4" y="465.5" width="2.7" height="2.3" fill="#fafaff" /><rect x="781.7" y="469.5" width="3.1" height="2.3" fill="#f0f0ff" /><rect x="786.5" y="469.5" width="2.3" height="2.3" fill="#fafaff" /><rect x="789.9" y="469.7" width="1.1" height="1.9" fill="#f0f0ff" /><rect x="792.1" y="469.7" width="2.3" height="1.9" fill="#f0f0ff" /><rect x="796.1" y="469.9" width="3.1" height="1.5" fill="#f0f0ff" /><rect x="800.9" y="469.9" width="2.3" height="1.5" fill="#dcdcf8" /><rect x="804.3" y="469.7" width="2.7" height="1.9" fill="#f0f0ff" /><rect x="808.1" y="469.5" width="2.7" height="2.3" fill="#fafaff" /><rect x="812.5" y="469.4" width="2.7" height="2.6" fill="#f0f0ff" /><rect x="782.8" y="473.7" width="1.1" height="1.9" fill="#fafaff" /><rect x="785.0" y="473.7" width="1.1" height="1.9" fill="#dcdcf8" /><rect x="787.4" y="473.4" width="1.3" height="2.6" fill="#dcdcf8" /><rect x="790.0" y="473.7" width="1.3" height="1.9" fill="#fafaff" /><rect x="792.4" y="473.7" width="1.1" height="1.9" fill="#f0f0ff" /><rect x="794.6" y="473.9" width="1.3" height="1.5" fill="#f0f0ff" /><rect x="797.0" y="473.7" width="2.3" height="1.9" fill="#dcdcf8" /><rect x="800.6" y="473.4" width="2.3" height="2.6" fill="#fafaff" /><rect x="804.0" y="473.4" width="2.3" height="2.6" fill="#dcdcf8" /><rect x="808.0" y="473.4" width="3.1" height="2.6" fill="#dcdcf8" /><rect x="812.2" y="473.7" width="3.0" height="1.9" fill="#dcdcf8" /><rect x="781.7" y="477.4" width="1.1" height="2.6" fill="#fafaff" /><rect x="784.5" y="477.8" width="1.1" height="1.9" fill="#fafaff" /><rect x="786.7" y="478.0" width="2.7" height="1.5" fill="#dcdcf8" /><rect x="790.5" y="477.4" width="2.3" height="2.6" fill="#fafaff" /><rect x="794.5" y="477.8" width="1.1" height="1.9" fill="#fafaff" /><rect x="796.9" y="478.0" width="1.1" height="1.5" fill="#dcdcf8" /><rect x="799.3" y="478.0" width="3.1" height="1.5" fill="#fafaff" /><rect x="803.7" y="477.8" width="2.3" height="1.9" fill="#dcdcf8" /><rect x="807.3" y="477.4" width="2.7" height="2.6" fill="#dcdcf8" /><rect x="811.1" y="477.6" width="3.1" height="2.3" fill="#dcdcf8" /><rect x="782.8" y="481.8" width="2.7" height="1.9" fill="#f0f0ff" /><rect x="786.6" y="481.4" width="2.7" height="2.6" fill="#f0f0ff" /><rect x="790.4" y="481.4" width="1.3" height="2.6" fill="#fafaff" /><rect x="792.8" y="482.0" width="2.3" height="1.5" fill="#fafaff" /><rect x="796.8" y="481.8" width="2.3" height="1.9" fill="#f0f0ff" /><rect x="800.2" y="481.8" width="2.7" height="1.9" fill="#dcdcf8" /><rect x="804.0" y="481.4" width="2.7" height="2.6" fill="#fafaff" /><rect x="808.4" y="481.8" width="1.3" height="1.9" fill="#dcdcf8" /><rect x="811.0" y="481.4" width="3.1" height="2.6" fill="#f0f0ff" /><rect x="781.7" y="485.6" width="1.3" height="2.3" fill="#f0f0ff" /><rect x="784.1" y="486.0" width="2.3" height="1.5" fill="#f0f0ff" /><rect x="788.1" y="485.5" width="2.7" height="2.6" fill="#dcdcf8" /><rect x="791.9" y="485.6" width="2.7" height="2.3" fill="#dcdcf8" /><rect x="796.3" y="486.0" width="2.3" height="1.5" fill="#fafaff" /><rect x="799.7" y="486.0" width="1.1" height="1.5" fill="#f0f0ff" /><rect x="802.1" y="485.8" width="1.1" height="1.9" fill="#f0f0ff" /><rect x="804.3" y="485.6" width="2.7" height="2.3" fill="#f0f0ff" /><rect x="808.1" y="485.5" width="3.1" height="2.6" fill="#dcdcf8" /><rect x="812.5" y="485.6" width="1.1" height="2.3" fill="#fafaff" /><rect x="782.8" y="489.5" width="1.3" height="2.6" fill="#fafaff" /><rect x="785.4" y="490.0" width="1.1" height="1.5" fill="#f0f0ff" /><rect x="787.6" y="489.8" width="3.1" height="1.9" fill="#fafaff" /><rect x="792.0" y="489.5" width="1.1" height="2.6" fill="#fafaff" /><rect x="794.4" y="489.5" width="3.1" height="2.6" fill="#f0f0ff" /><rect x="799.2" y="490.0" width="1.3" height="1.5" fill="#dcdcf8" /><rect x="802.2" y="490.0" width="1.3" height="1.5" fill="#fafaff" /><rect x="804.8" y="489.8" width="1.1" height="1.9" fill="#fafaff" /><rect x="807.2" y="489.8" width="2.3" height="1.9" fill="#f0f0ff" /><rect x="810.8" y="489.8" width="3.1" height="1.9" fill="#f0f0ff" /><rect x="781.7" y="493.6" width="1.1" height="2.3" fill="#fafaff" /><rect x="783.9" y="493.8" width="1.1" height="1.9" fill="#dcdcf8" /><rect x="786.3" y="493.5" width="1.3" height="2.6" fill="#fafaff" /><rect x="789.3" y="493.5" width="2.7" height="2.6" fill="#dcdcf8" /><rect x="793.3" y="493.6" width="3.1" height="2.3" fill="#dcdcf8" /><rect x="797.5" y="493.6" width="1.3" height="2.3" fill="#fafaff" /><rect x="800.5" y="493.5" width="1.3" height="2.6" fill="#f0f0ff" /><rect x="802.9" y="494.0" width="1.3" height="1.5" fill="#fafaff" /><rect x="805.9" y="493.5" width="2.3" height="2.6" fill="#fafaff" /><rect x="809.3" y="493.5" width="1.1" height="2.6" fill="#dcdcf8" /><rect x="812.1" y="493.8" width="2.3" height="1.9" fill="#dcdcf8" /><rect x="782.8" y="497.5" width="1.1" height="2.6" fill="#fafaff" /><rect x="785.0" y="497.5" width="2.3" height="2.6" fill="#fafaff" /><rect x="788.6" y="497.7" width="2.3" height="2.3" fill="#dcdcf8" /><rect x="792.2" y="498.1" width="1.3" height="1.5" fill="#f0f0ff" /><rect x="794.6" y="497.9" width="2.3" height="1.9" fill="#fafaff" /><rect x="798.2" y="498.1" width="2.7" height="1.5" fill="#f0f0ff" /><rect x="802.2" y="497.9" width="3.1" height="1.9" fill="#fafaff" /><rect x="807.0" y="498.1" width="1.1" height="1.5" fill="#f0f0ff" /><rect x="809.2" y="497.5" width="1.3" height="2.6" fill="#dcdcf8" /><rect x="811.6" y="498.1" width="2.7" height="1.5" fill="#f0f0ff" /><rect x="781.7" y="502.1" width="1.3" height="1.5" fill="#dcdcf8" /><rect x="784.7" y="501.5" width="1.3" height="2.6" fill="#f0f0ff" /><rect x="787.7" y="501.9" width="2.7" height="1.9" fill="#f0f0ff" /><rect x="792.1" y="501.9" width="3.1" height="1.9" fill="#fafaff" /><rect x="796.9" y="501.5" width="3.1" height="2.6" fill="#dcdcf8" /><rect x="801.7" y="501.9" width="3.1" height="1.9" fill="#dcdcf8" /><rect x="806.5" y="502.1" width="3.1" height="1.5" fill="#dcdcf8" /><rect x="811.3" y="502.1" width="1.3" height="1.5" fill="#fafaff" /><rect x="813.7" y="501.7" width="1.3" height="2.3" fill="#fafaff" /><rect x="706.3" y="508.2" width="50.7" height="20.6" fill="#14127e" /><rect x="707.5" y="509.9" width="2.7" height="1.5" fill="#dcdcf8" /><rect x="711.3" y="509.7" width="3.1" height="1.9" fill="#f0f0ff" /><rect x="715.7" y="509.3" width="1.1" height="2.6" fill="#fafaff" /><rect x="718.5" y="509.9" width="3.1" height="1.5" fill="#dcdcf8" /><rect x="723.3" y="509.3" width="1.1" height="2.6" fill="#f0f0ff" /><rect x="725.5" y="509.7" width="2.3" height="1.9" fill="#dcdcf8" /><rect x="728.9" y="509.3" width="1.3" height="2.6" fill="#f0f0ff" /><rect x="731.5" y="509.3" width="1.1" height="2.6" fill="#dcdcf8" /><rect x="733.9" y="509.7" width="1.1" height="1.9" fill="#fafaff" /><rect x="736.7" y="509.4" width="1.3" height="2.3" fill="#f0f0ff" /><rect x="739.7" y="509.7" width="2.3" height="1.9" fill="#fafaff" /><rect x="743.3" y="509.3" width="1.1" height="2.6" fill="#f0f0ff" /><rect x="746.1" y="509.7" width="1.1" height="1.9" fill="#dcdcf8" /><rect x="748.5" y="509.4" width="2.3" height="2.3" fill="#f0f0ff" /><rect x="752.1" y="509.9" width="2.7" height="1.5" fill="#dcdcf8" /><rect x="708.6" y="513.9" width="2.3" height="1.5" fill="#f0f0ff" /><rect x="712.0" y="513.3" width="2.3" height="2.6" fill="#fafaff" /><rect x="716.0" y="513.5" width="2.7" height="2.3" fill="#f0f0ff" /><rect x="719.8" y="513.9" width="1.3" height="1.5" fill="#dcdcf8" /><rect x="722.2" y="513.5" width="1.3" height="2.3" fill="#f0f0ff" /><rect x="724.6" y="513.5" width="3.1" height="2.3" fill="#fafaff" /><rect x="729.4" y="513.7" width="2.3" height="1.9" fill="#f0f0ff" /><rect x="733.0" y="513.9" width="2.7" height="1.5" fill="#fafaff" /><rect x="736.8" y="513.3" width="2.7" height="2.6" fill="#f0f0ff" /><rect x="740.8" y="513.3" width="1.3" height="2.6" fill="#f0f0ff" /><rect x="743.4" y="513.9" width="2.3" height="1.5" fill="#f0f0ff" /><rect x="746.8" y="513.5" width="2.3" height="2.3" fill="#f0f0ff" /><rect x="750.2" y="513.9" width="1.3" height="1.5" fill="#dcdcf8" /><rect x="752.8" y="513.5" width="2.3" height="2.3" fill="#fafaff" /><rect x="707.5" y="517.9" width="2.7" height="1.5" fill="#f0f0ff" /><rect x="711.5" y="517.9" width="2.3" height="1.5" fill="#f0f0ff" /><rect x="714.9" y="517.5" width="1.1" height="2.3" fill="#dcdcf8" /><rect x="717.1" y="517.5" width="1.3" height="2.3" fill="#f0f0ff" /><rect x="720.1" y="517.7" width="2.3" height="1.9" fill="#f0f0ff" /><rect x="723.7" y="517.3" width="1.1" height="2.6" fill="#dcdcf8" /><rect x="726.5" y="517.9" width="1.3" height="1.5" fill="#fafaff" /><rect x="729.5" y="517.3" width="2.7" height="2.6" fill="#dcdcf8" /><rect x="733.3" y="517.3" width="2.3" height="2.6" fill="#fafaff" /><rect x="737.3" y="517.7" width="1.3" height="1.9" fill="#f0f0ff" /><rect x="739.9" y="517.5" width="2.3" height="2.3" fill="#f0f0ff" /><rect x="743.5" y="517.3" width="2.3" height="2.6" fill="#dcdcf8" /><rect x="746.9" y="517.3" width="2.3" height="2.6" fill="#dcdcf8" /><rect x="750.9" y="517.9" width="2.7" height="1.5" fill="#fafaff" /><rect x="755.3" y="517.9" width="0.7" height="1.5" fill="#fafaff" /><rect x="708.6" y="521.7" width="2.7" height="1.9" fill="#f0f0ff" /><rect x="712.6" y="521.4" width="2.7" height="2.6" fill="#fafaff" /><rect x="717.0" y="521.7" width="1.3" height="1.9" fill="#fafaff" /><rect x="719.4" y="521.9" width="2.3" height="1.5" fill="#f0f0ff" /><rect x="722.8" y="521.5" width="2.3" height="2.3" fill="#dcdcf8" /><rect x="726.2" y="521.4" width="1.1" height="2.6" fill="#f0f0ff" /><rect x="728.6" y="521.7" width="3.1" height="1.9" fill="#f0f0ff" /><rect x="733.0" y="521.9" width="2.3" height="1.5" fill="#f0f0ff" /><rect x="736.6" y="521.5" width="3.1" height="2.3" fill="#fafaff" /><rect x="741.4" y="521.7" width="3.1" height="1.9" fill="#fafaff" /><rect x="745.8" y="521.4" width="1.3" height="2.6" fill="#f0f0ff" /><rect x="748.8" y="521.4" width="2.7" height="2.6" fill="#f0f0ff" /><rect x="752.6" y="521.9" width="1.3" height="1.5" fill="#f0f0ff" /><rect x="707.5" y="525.4" width="1.1" height="2.6" fill="#dcdcf8" /><rect x="709.9" y="525.7" width="2.7" height="1.9" fill="#fafaff" /><rect x="713.7" y="525.7" width="1.3" height="1.9" fill="#dcdcf8" /><rect x="716.7" y="525.4" width="1.1" height="2.6" fill="#fafaff" /><rect x="719.5" y="525.9" width="1.1" height="1.5" fill="#fafaff" /><rect x="721.7" y="525.9" width="3.1" height="1.5" fill="#dcdcf8" /><rect x="726.5" y="525.7" width="2.3" height="1.9" fill="#dcdcf8" /><rect x="730.1" y="525.4" width="3.1" height="2.6" fill="#dcdcf8" /><rect x="734.3" y="525.9" width="1.1" height="1.5" fill="#f0f0ff" /><rect x="737.1" y="525.7" width="3.1" height="1.9" fill="#f0f0ff" /><rect x="741.5" y="525.9" width="1.3" height="1.5" fill="#fafaff" /><rect x="744.5" y="525.4" width="2.3" height="2.6" fill="#f0f0ff" /><rect x="748.1" y="525.4" width="1.3" height="2.6" fill="#dcdcf8" /><rect x="750.5" y="525.7" width="3.1" height="1.9" fill="#fafaff" /><rect x="754.9" y="525.9" width="1.1" height="1.5" fill="#fafaff" /><rect x="706.3" y="499.0" width="50.7" height="7.8" fill="#14127e" /><rect x="708.0" y="501.0" width="2.8" height="1.6" fill="#fafaff" /><rect x="709.5" y="503.8" width="2.5" height="1.6" fill="#f4f4ff" /><rect x="712.5" y="501.0" width="2.8" height="1.6" fill="#fafaff" /><rect x="714.0" y="503.8" width="2.5" height="1.6" fill="#f4f4ff" /><rect x="717.0" y="501.0" width="2.8" height="1.6" fill="#fafaff" /><rect x="718.5" y="503.8" width="2.5" height="1.6" fill="#f4f4ff" /><rect x="721.5" y="501.0" width="2.8" height="1.6" fill="#fafaff" /><rect x="723.0" y="503.8" width="2.5" height="1.6" fill="#f4f4ff" /><rect x="726.0" y="501.0" width="2.8" height="1.6" fill="#fafaff" /><rect x="727.5" y="503.8" width="2.5" height="1.6" fill="#f4f4ff" /><rect x="730.5" y="501.0" width="2.8" height="1.6" fill="#fafaff" /><rect x="732.0" y="503.8" width="2.5" height="1.6" fill="#f4f4ff" /><rect x="735.0" y="501.0" width="2.8" height="1.6" fill="#fafaff" /><rect x="736.5" y="503.8" width="2.5" height="1.6" fill="#f4f4ff" /><rect x="739.5" y="501.0" width="2.8" height="1.6" fill="#fafaff" /><rect x="741.0" y="503.8" width="2.5" height="1.6" fill="#f4f4ff" /><rect x="744.0" y="501.0" width="2.8" height="1.6" fill="#fafaff" /><rect x="745.5" y="503.8" width="2.5" height="1.6" fill="#f4f4ff" /><rect x="748.5" y="501.0" width="2.8" height="1.6" fill="#fafaff" /><rect x="750.0" y="503.8" width="2.5" height="1.6" fill="#f4f4ff" /><rect x="753.0" y="501.0" width="2.8" height="1.6" fill="#fafaff" /><rect x="754.5" y="503.8" width="2.5" height="1.6" fill="#f4f4ff" /><rect x="757.0" y="499.0" width="3.0" height="6.0" fill="#fbfbfb" /><path d="M675.600 414 H714.600 V447 H675.600z" fill="none" stroke="#c01c44" stroke-width="2.6" /><path d="M675.600 414 H714.600 V447 H675.600z" fill="none" stroke="#fbf4f6" stroke-width="0.9000000000000001" /><path d="M680.600 459.200 H714 V497.400 H680.600z" fill="none" stroke="#c01c44" stroke-width="2.6" /><path d="M680.600 459.200 H714 V497.400 H680.600z" fill="none" stroke="#fbf4f6" stroke-width="0.9000000000000001" /><path d="M714.600 422.400 V447 H750 M750 422.400 V459.200 M750 422.400 H783.400 V459.200 H750 M714 487.400 H750 M750 459.200 V497.400 M750 497.400 H780.400 V459.200 M714 497.400 H750 M767 424 V459" fill="none" stroke="#bc1850" stroke-width="1.3" /><path d="M680.600 447 V459.200" fill="none" stroke="#8c8c90" stroke-width="0.9" /><rect x="674.5" y="421.0" width="2.3" height="17.0" fill="#16168c" /><rect x="679.5" y="470.0" width="2.3" height="16.0" fill="#16168c" /><rect x="687.0" y="496.4" width="16.0" height="2.2" fill="#16168c" /><rect x="690.0" y="413.0" width="13.0" height="2.2" fill="#16168c" /><rect x="706.0" y="455.5" width="8.0" height="3.1" fill="#16168c" /><rect x="750.0" y="455.5" width="18.0" height="3.1" fill="#16168c" /><rect x="722.0" y="485.4" width="5.0" height="3.2" fill="#16168c" /><rect x="736.0" y="485.4" width="5.0" height="3.2" fill="#16168c" /><rect x="760.0" y="496.4" width="16.0" height="2.2" fill="#16168c" /><rect x="779.4" y="462.0" width="2.2" height="32.0" fill="#16168c" /><rect x="753.0" y="421.2" width="27.0" height="2.3" fill="#16168c" /><rect x="755.5" y="430.8" width="7.1" height="19.8" fill="#101060" /><path d="M751.0 428.0 L755.5 428.0" stroke="#bc1850" stroke-width="0.8"/><path d="M762.6 428.0 L767.0 428.0" stroke="#bc1850" stroke-width="0.8"/><path d="M751.0 432.5 L755.5 432.5" stroke="#bc1850" stroke-width="0.8"/><path d="M762.6 432.5 L767.0 432.5" stroke="#bc1850" stroke-width="0.8"/><path d="M751.0 437.0 L755.5 437.0" stroke="#bc1850" stroke-width="0.8"/><path d="M762.6 437.0 L767.0 437.0" stroke="#bc1850" stroke-width="0.8"/><path d="M751.0 441.5 L755.5 441.5" stroke="#bc1850" stroke-width="0.8"/><path d="M762.6 441.5 L767.0 441.5" stroke="#bc1850" stroke-width="0.8"/><path d="M751.0 446.0 L755.5 446.0" stroke="#bc1850" stroke-width="0.8"/><path d="M762.6 446.0 L767.0 446.0" stroke="#bc1850" stroke-width="0.8"/><rect x="756.0" y="425.5" width="8.0" height="4.5" fill="#fbfbfb" /><rect x="767.800" y="424.200" width="12.600" height="19" rx="3" fill="#1c7c9c"/><rect x="774.0" y="436.1" width="1.0" height="1.0" fill="#e0d060" /><rect x="769.8" y="429.4" width="1.0" height="1.0" fill="#e0d060" /><rect x="778.3" y="429.4" width="1.0" height="1.0" fill="#7cd0c0" /><rect x="776.0" y="436.8" width="1.0" height="1.0" fill="#e0d060" /><rect x="775.8" y="429.0" width="1.0" height="1.0" fill="#e0d060" /><rect x="776.4" y="433.6" width="1.0" height="1.0" fill="#7cd0c0" /><rect x="774.0" y="429.0" width="1.0" height="1.0" fill="#7cd0c0" /><rect x="771.3" y="429.3" width="1.0" height="1.0" fill="#e0d060" /><rect x="770.1" y="435.4" width="1.0" height="1.0" fill="#0c4c7c" /><rect x="770.9" y="429.3" width="1.0" height="1.0" fill="#e0d060" /><rect x="776.0" y="445.5" width="4.4" height="12.0" fill="#701880" /><rect x="770.0" y="443.0" width="6.0" height="3.5" fill="#2c8a4c" /><path d="M751.500 474.500 h4 v6 h-4z M751.500 480 h16 v11.500 h-16z M763.500 478 v14 M751.500 491.500 v5 h16 v-5" fill="none" stroke="#bc1850" stroke-width="1" /><circle cx="709" cy="443" r="5.5" fill="none" stroke="#80e8e0" stroke-width="1" stroke-dasharray="9.9 27.5"/><circle cx="709" cy="462" r="5.5" fill="none" stroke="#80e8e0" stroke-width="1" stroke-dasharray="9.9 27.5"/><circle cx="752" cy="452" r="5.5" fill="none" stroke="#80e8e0" stroke-width="1" stroke-dasharray="9.9 27.5"/><circle cx="752" cy="465" r="5.5" fill="none" stroke="#80e8e0" stroke-width="1" stroke-dasharray="9.9 27.5"/><circle cx="731" cy="486" r="4" fill="none" stroke="#80e8e0" stroke-width="1" stroke-dasharray="7.2 20.0"/><path d="M689.4 426.3 H696.8 V429.2 H699.2 V432.8 H687.0 V429.2 H689.4z" fill="#d87a22"/><path d="M693.5 450.4 H701.6 V453.2 H704.3 V456.6 H690.8 V453.2 H693.5z" fill="#d87a22"/><path d="M693.2 476.2 H700.6 V479.2 H703.0 V482.8 H690.8 V479.2 H693.2z" fill="#d87a22"/><path d="M726.3 465.2 H733.0 V468.2 H735.2 V471.8 H724.1 V468.2 H726.3z" fill="#d87a22"/><path d="M728.3 492.0 H735.1 V495.4 H737.4 V499.6 H726.0 V495.4 H728.3z" fill="#d87a22"/><rect x="757.3" y="471.3" width="12.2" height="6.1" fill="#d87a22" /><rect x="741.3" y="411.3" width="20.7" height="2.7" fill="#d87a22" /><rect x="768.0" y="450.7" width="8.4" height="6.1" fill="#d87a22" /><rect x="720.6" y="432.0" width="16.2" height="3.4" fill="#a87838" /><path d="M760 414 q2 2 1.500 5" fill="none" stroke="#d87a22" stroke-width="0.8" /><rect x="677.6" y="408.2" width="3.8" height="3.6" fill="#0c0c0c" /><rect x="749.6" y="416.7" width="3.8" height="3.6" fill="#0c0c0c" /><rect x="751.1" y="427.7" width="3.8" height="3.6" fill="#0c0c0c" /><rect x="733.1" y="440.2" width="3.8" height="3.6" fill="#0c0c0c" /><rect x="762.1" y="452.2" width="3.8" height="3.6" fill="#0c0c0c" /><rect x="769.1" y="458.7" width="3.8" height="3.6" fill="#0c0c0c" /><rect x="776.1" y="460.2" width="3.8" height="3.6" fill="#0c0c0c" /><rect x="776.6" y="493.2" width="3.8" height="3.6" fill="#0c0c0c" /><rect x="683.1" y="492.7" width="3.8" height="3.6" fill="#0c0c0c" /><rect x="674.6" y="495.2" width="3.8" height="3.6" fill="#0c0c0c" /><rect x="716.1" y="492.2" width="3.8" height="3.6" fill="#0c0c0c" /><rect x="707.1" y="497.2" width="3.8" height="3.6" fill="#0c0c0c" /><rect x="696.1" y="500.2" width="3.8" height="3.6" fill="#0c0c0c" /><rect x="757.1" y="500.7" width="3.8" height="3.6" fill="#0c0c0c" /><rect x="777.1" y="497.7" width="3.8" height="3.6" fill="#0c0c0c" /><path d="M694 408.2 l2.300 2.300 -2.300 2.300 -2.300-2.300z" fill="#2c8a4c"/><path d="M672 427.7 l2.300 2.300 -2.300 2.300 -2.300-2.300z" fill="#2c8a4c"/><path d="M677 475.7 l2.300 2.300 -2.300 2.300 -2.300-2.300z" fill="#2c8a4c"/><path d="M693.5 498.2 l2.300 2.300 -2.300 2.300 -2.300-2.300z" fill="#2c8a4c"/><path d="M708.5 443.2 l2.300 2.300 -2.300 2.300 -2.300-2.300z" fill="#2c8a4c"/><path d="M727.5 440.7 l2.300 2.300 -2.300 2.300 -2.300-2.300z" fill="#2c8a4c"/><path d="M744.5 443.2 l2.300 2.300 -2.300 2.300 -2.300-2.300z" fill="#2c8a4c"/><path d="M714.5 453.2 l2.300 2.300 -2.300 2.300 -2.300-2.300z" fill="#2c8a4c"/><path d="M749 452.7 l2.300 2.300 -2.300 2.300 -2.300-2.300z" fill="#2c8a4c"/><path d="M713.5 462.2 l2.300 2.300 -2.300 2.300 -2.300-2.300z" fill="#2c8a4c"/><path d="M749.5 462.2 l2.300 2.300 -2.300 2.300 -2.300-2.300z" fill="#2c8a4c"/><path d="M731 488.2 l2.300 2.300 -2.300 2.300 -2.300-2.300z" fill="#2c8a4c"/><path d="M769.5 498.2 l2.300 2.300 -2.300 2.300 -2.300-2.300z" fill="#2c8a4c"/><path d="M758 418.2 l2.300 2.300 -2.300 2.300 -2.300-2.300z" fill="#2c8a4c"/><path d="M774 417.7 l2.300 2.300 -2.300 2.300 -2.300-2.300z" fill="#2c8a4c"/><path d="M770.5 442.2 l2.300 2.300 -2.300 2.300 -2.300-2.300z" fill="#2c8a4c"/><path d="M784.5 465.2 l2.300 2.300 -2.300 2.300 -2.300-2.300z" fill="#2c8a4c"/><path d="M784.5 486.7 l2.300 2.300 -2.300 2.300 -2.300-2.300z" fill="#2c8a4c"/><rect x="1086.8" y="568.0" width="2.3" height="64.0" fill="#a4dcd8" /><path d="M1056.2 600.5 L1120.7 600.5" stroke="#b08894" stroke-width="1"/><rect x="1082.7" y="595.5" width="10.8" height="9.9" fill="none" stroke="#181818" stroke-width="1.3"/><path d="M86.200 742.500 l3 5 3-5 M89.200 747.500 v7.500" fill="none" stroke="#8cc4a8" stroke-width="1.1" /><path d="M89.5 761.0 L89.5 773.5" stroke="#101010" stroke-width="1.3"/><path d="M89.0 773.5 L89.0 822.5" stroke="#78b898" stroke-width="1.5"/><path d="M90.0 774.5 L118.0 774.5" stroke="#d4a4ac" stroke-width="1.2"/><path d="M118.600 773.400 V780.300 H127.200z" fill="none" stroke="#101010" stroke-width="1.2" /><path d="M126.8 781.0 L126.8 822.0" stroke="#78b898" stroke-width="1.5"/><path d="M89.0 822.8 L126.5 822.8" stroke="#d49098" stroke-width="1.3"/><path d="M126.5 822.5 L152.0 822.5" stroke="#101010" stroke-width="1.3"/><path d="M157 817 l11 11.500 M168 817 l-11 11.500" fill="none" stroke="#d0a0a8" stroke-width="1.1" /></svg></div>
<div id="rightpanel"></div>
<div id="layouttabs"><div class="abs" style="left:0;top:0;width:1877px;height:1px;background:#202127"></div><div class="abs" style="left:284px;top:1px;width:1593px;height:20px;background:linear-gradient(#26272f,#2d2e37);border-bottom:1px solid #474852;border-right:1px solid #474852"></div><div class="abs" style="left:0;top:1px;width:284px;height:20px;background:#1f2026"></div><div class="abs" style="left:1px;top:1px;width:20px;height:19px;background:#2c2d35;border-right:1px solid #4c4d55"></div><div class="abs" style="left:22px;top:1px;width:20px;height:19px;background:#2c2d35;border-right:1px solid #4c4d55"></div><div class="abs" style="left:43px;top:1px;width:20px;height:19px;background:#2c2d35;border-right:1px solid #4c4d55"></div><div class="abs" style="left:64px;top:1px;width:20px;height:19px;background:#2c2d35;border-right:1px solid #4c4d55"></div><div class="abs" style="left:85px;top:1px;width:20px;height:19px;background:#2c2d35;border-right:1px solid #4c4d55"></div><div class="abs" style="left:105px;top:2px;width:178px;height:18px;background:#2a2b33"></div><div class="abs" style="left:150px;top:2px;width:59px;height:18px;background:#484a55"></div></div>
<div id="cmdpanel"><div class="abs" style="left:0;top:0;width:1877px;height:2px;background:#202127"></div><div id="cmdhist"></div><div id="cmdscroll"><div class="abs" style="left:1px;top:53px;width:19px;height:21px;background:#cdcdcd"></div></div><div id="cmdline"></div></div>
<div id="statusbar"><div class="abs" style="left:60px;top:20px;width:432px;height:2px;background:#f0f0f0"></div></div>
<div class="abs" style="left:1289.6px;top:1060.5px;width:45.2px;height:15.5px;background:#4b4c57"></div><div class="abs" style="left:1388.0px;top:1060.5px;width:39.8px;height:15.5px;background:#4b4c57"></div><div class="abs" style="left:1434.4px;top:1060.5px;width:48.0px;height:15.5px;background:#4b4c57"></div><div class="abs" style="left:1615.0px;top:1060.5px;width:33.2px;height:15.5px;background:#4b4c57"></div><div class="abs" style="left:1727.6px;top:1060.5px;width:17.2px;height:15.5px;background:#4b4c57"></div><div class="abs" style="left:1751.4px;top:1060.5px;width:25.2px;height:15.5px;background:#4b4c57"></div><div class="abs" style="left:833.75px;top:1059.5px;width:1.5px;height:17.5px;background:#d0d0d2"></div><div class="abs" style="left:1017.75px;top:1059.5px;width:1.5px;height:17.5px;background:#d0d0d2"></div><div class="abs" style="left:1078.05px;top:1059.5px;width:1.5px;height:17.5px;background:#d0d0d2"></div><div class="abs" style="left:1150.55px;top:1059.5px;width:1.5px;height:17.5px;background:#d0d0d2"></div><div class="abs" style="left:1203.85px;top:1059.5px;width:1.5px;height:17.5px;background:#d0d0d2"></div><div class="abs" style="left:1246.75px;top:1059.5px;width:1.5px;height:17.5px;background:#d0d0d2"></div><div class="abs" style="left:1286.25px;top:1059.5px;width:1.5px;height:17.5px;background:#d0d0d2"></div><div class="abs" style="left:1336.65px;top:1059.5px;width:1.5px;height:17.5px;background:#d0d0d2"></div><div class="abs" style="left:1383.85px;top:1059.5px;width:1.5px;height:17.5px;background:#d0d0d2"></div><div class="abs" style="left:1430.65px;top:1059.5px;width:1.5px;height:17.5px;background:#d0d0d2"></div><div class="abs" style="left:1485.45px;top:1059.5px;width:1.5px;height:17.5px;background:#d0d0d2"></div><div class="abs" style="left:1519.25px;top:1059.5px;width:1.5px;height:17.5px;background:#d0d0d2"></div><div class="abs" style="left:1584.45px;top:1059.5px;width:1.5px;height:17.5px;background:#d0d0d2"></div><div class="abs" style="left:1611.25px;top:1059.5px;width:1.5px;height:17.5px;background:#d0d0d2"></div><div class="abs" style="left:1651.45px;top:1059.5px;width:1.5px;height:17.5px;background:#d0d0d2"></div><div class="abs" style="left:1682.25px;top:1059.5px;width:1.5px;height:17.5px;background:#d0d0d2"></div><div class="abs" style="left:1723.65px;top:1059.5px;width:1.5px;height:17.5px;background:#d0d0d2"></div><div class="abs" style="left:1747.65px;top:1059.5px;width:1.5px;height:17.5px;background:#d0d0d2"></div><div class="abs" style="left:1779.05px;top:1059.5px;width:1.5px;height:17.5px;background:#d0d0d2"></div><div class="abs" style="left:1830.05px;top:1059.5px;width:1.5px;height:17.5px;background:#d0d0d2"></div><div class="abs" style="left:1868.05px;top:1059.5px;width:1.5px;height:17.5px;background:#d0d0d2"></div>
<svg class="ov" width="1920" height="1080" viewBox="0 0 1920 1080"><rect x="4.6" y="5.1" width="15.3" height="14.9" rx="2.5" fill="#3a7be0"/><path d="M8.700 16.600 L12.300 9.700 L13.500 13 M13.300 16.500 V14.700 Q13.300 13.100 14.800 13.100 Q16.300 13.100 16.300 14.700 V16.500" fill="none" stroke="#dcf4ec" stroke-width="1.600" stroke-linejoin="round"/><path d="M1772.3 12.5 H1784.5" stroke="#111" stroke-width="1.1"/><rect x="1831" y="9.7" width="9.6" height="9" rx="1.2" fill="none" stroke="#111" stroke-width="1.2"/><path d="M1833.2 9.5 V8.6 q0-1.2 1.2-1.2 h6.8 q1.2 0 1.2 1.2 v6.6 q0 1.2-1.2 1.2 h-.6" fill="none" stroke="#111" stroke-width="1.2"/><path d="M1890 7 L1902 18.8 M1902 7 L1890 18.8" stroke="#111" stroke-width="1.1"/><rect x="8" y="36.2" width="2" height="1.8" fill="#f0f0f0"/><rect x="8" y="39.5" width="2" height="1.8" fill="#f0f0f0"/><rect x="8" y="42.8" width="2" height="1.8" fill="#f0f0f0"/><rect x="8" y="46.1" width="2" height="1.8" fill="#f0f0f0"/><rect x="8" y="49.4" width="2" height="1.8" fill="#f0f0f0"/><rect x="8" y="52.7" width="2" height="1.8" fill="#f0f0f0"/><path d="M26.7 36.7 h6 l4 4 v10 h-10z M32.7 36.7 v4 h4" fill="none" stroke="#e2e2e5" stroke-width="1.4"/><path d="M36 44.5 l1.2 2.6 2.6 1.2 -2.6 1.2 -1.2 2.6 -1.2 -2.6 -2.6 -1.2 2.6 -1.2z" fill="#e8a040"/><path d="M51.7 48.3 v-9.6 h4.6 l1.4 1.8 h6 v2.2 M51.7 48.3 l2.6-5.6 h12 l-2.6 5.6z" fill="none" stroke="#e2e2e5" stroke-width="1.4"/><path d="M64 46.5 v4 M61.8 49 l2.2 2.4 2.2-2.4" fill="none" stroke="#4a84d8" stroke-width="1.5"/><rect x="80.6" y="37.4" width="13" height="13.4" fill="#283452" stroke="#4270c0" stroke-width="1.2"/><rect x="83.2" y="38.6" width="7.8" height="3.6" fill="#e2e2e5"/><path d="M83.6 50.6 v-6 h7 v6 M86 50.6 v-2.6 h2.4 v2.6" fill="none" stroke="#e2e2e5" stroke-width="1.4"/><rect x="108.4" y="36.4" width="12.6" height="13" fill="#283452" stroke="#4270c0" stroke-width="1.2"/><rect x="111" y="37.6" width="7.6" height="3.4" fill="#e2e2e5"/><path d="M111.4 49.4 v-6 h7 v4 M113.8 49.4 v-2.6 h2.4 v2.6" fill="none" stroke="#e2e2e5" stroke-width="1.4"/><path d="M116.5 51.5 l5-5 1.6 1.6 -5 5 -2.2.6z" fill="#f0e0c0" stroke="#e8a040" stroke-width=".5"/><rect x="133.5" y="33" width="1" height="23" fill="#56575f"/><rect x="225.5" y="33" width="1" height="23" fill="#56575f"/><rect x="289.5" y="33" width="1" height="23" fill="#56575f"/><rect x="774.5" y="33" width="1" height="23" fill="#56575f"/><rect x="923.5" y="33" width="1" height="23" fill="#56575f"/><path d="M147.5 42.5 v-5.6 h8 v5.6" fill="none" stroke="#e2e2e5" stroke-width="1.4"/><path d="M147.0 49.5 h-1.6 q-1.6 0-1.6-1.6 v-3.8 q0-1.6 1.6-1.6 h1 M156.0 42.5 h1.4 q1.6 0 1.6 1.6 v3.8 q0 1.6-1.6 1.6 h-1.6" fill="none" stroke="#e2e2e5" stroke-width="1.4"/><rect x="148.0" y="47.2" width="7.4" height="4.3" fill="none" stroke="#e2e2e5" stroke-width="1.3"/><circle cx="147.8" cy="46.8" r="3.1" fill="#2b2b35" stroke="#e2e2e5" stroke-width="1.2"/><path d="M145.5 49.2 l-2.2 2.6" stroke="#e2e2e5" stroke-width="1.4"/><rect x="151.5" y="49" width="4" height="2" fill="#4a84d8"/><path d="M176 42.5 v-5.6 h8 v5.6" fill="none" stroke="#e2e2e5" stroke-width="1.4"/><path d="M175.5 49.5 h-1.6 q-1.6 0-1.6-1.6 v-3.8 q0-1.6 1.6-1.6 h1 M184.5 42.5 h1.4 q1.6 0 1.6 1.6 v3.8 q0 1.6-1.6 1.6 h-1.6" fill="none" stroke="#e2e2e5" stroke-width="1.4"/><rect x="176.5" y="47.2" width="7.4" height="4.3" fill="none" stroke="#e2e2e5" stroke-width="1.3"/><path d="M184 45.5 l1.2 2.4 2.4 1.2 -2.4 1.2 -1.2 2.4 -1.2 -2.4 -2.4 -1.2 2.4 -1.2z" fill="#e8a040"/><path d="M204 42.5 v-5.6 h8 v5.6" fill="none" stroke="#e2e2e5" stroke-width="1.4"/><path d="M203.5 49.5 h-1.6 q-1.6 0-1.6-1.6 v-3.8 q0-1.6 1.6-1.6 h1 M212.5 42.5 h1.4 q1.6 0 1.6 1.6 v3.8 q0 1.6-1.6 1.6 h-1.6" fill="none" stroke="#e2e2e5" stroke-width="1.4"/><rect x="204.5" y="47.2" width="7.4" height="4.3" fill="none" stroke="#e2e2e5" stroke-width="1.3"/><path d="M199.5 49.3 h5 M202.5 47 l2.4 2.3 -2.4 2.3" fill="none" stroke="#4a84d8" stroke-width="1.5"/><path d="M237.6 42.6 l5.4-4.4 v2.8 c4.6 0 7.6 2.6 7.8 7.6 c-1.6-2.6-4-3.6-7.8-3.4 v2.4z" fill="none" stroke="#e2e2e5" stroke-width="1.4" stroke-linejoin="round"/><path d="M278.8 42.6 l-5.4-4.4 v2.8 c-4.6 0-7.6 2.6-7.8 7.6 c1.6-2.6 4-3.6 7.8-3.4 v2.4z" fill="none" stroke="#e2e2e5" stroke-width="1.4" stroke-linejoin="round"/><rect x="298" y="34.700" width="301" height="20.300" fill="#44464f"/><rect x="298" y="34.700" width="301" height="20.300" fill="none" stroke="#36373f" stroke-width="1"/><path d="M306 37 c-2.8 0-4.6 2-4.6 4.4 c0 2 1.4 3 2.2 4.6 v1.6 h4.8 v-1.6 c.8-1.6 2.2-2.6 2.2-4.6 c0-2.4-1.8-4.4-4.6-4.4z" fill="#f2d060" stroke="#b08a20" stroke-width=".6"/><rect x="304.4" y="48.2" width="3.2" height="2.4" fill="#ddd"/><circle cx="324" cy="45" r="4.6" fill="#f2d060" stroke="#b08a20" stroke-width=".6"/><circle cx="330.6" cy="45.0" r=".9" fill="#d8b040"/><circle cx="328.7" cy="49.7" r=".9" fill="#d8b040"/><circle cx="324.0" cy="51.6" r=".9" fill="#d8b040"/><circle cx="319.3" cy="49.7" r=".9" fill="#d8b040"/><circle cx="317.4" cy="45.0" r=".9" fill="#d8b040"/><circle cx="319.3" cy="40.3" r=".9" fill="#d8b040"/><circle cx="324.0" cy="38.4" r=".9" fill="#d8b040"/><circle cx="328.7" cy="40.3" r=".9" fill="#d8b040"/><rect x="335.4" y="39.6" width="8.6" height="6.4" fill="#d0d0d4"/><circle cx="345.6" cy="48" r="4.4" fill="#f2d060" stroke="#e0e0e0" stroke-width="1"/><path d="M354.6 43 v-1.6 q0-2.4 2.4-2.4 q2.4 0 2.4 2" fill="none" stroke="#ddd" stroke-width="1.2"/><rect x="357.4" y="42.8" width="10.6" height="1.7" fill="#e8c060"/><rect x="357.4" y="45.3" width="10.6" height="1.7" fill="#e8c060"/><rect x="357.4" y="47.8" width="10.6" height="1.7" fill="#e8c060"/><rect x="357.4" y="50.3" width="10.6" height="1.7" fill="#e8c060"/><rect x="374.4" y="38" width="7.6" height="4" fill="#e8e8e8"/><rect x="371.4" y="42.6" width="14" height="5" fill="#d8d8dc"/><rect x="374.8" y="47" width="7" height="4" fill="#f4f4f4"/><rect x="391.200" y="36.500" width="17.200" height="16.800" rx="1.300" fill="#fafafa" stroke="#08080c" stroke-width="1.200"/><path d="M583.6 45.6 l4.8 4.4 4.8-4.4" fill="none" stroke="#d8d8dc" stroke-width="1.3"/><path d="M614.6 36.8 h4.2 v5.4 h2.6 v3 h-9.4 v-3 h2.6z" fill="none" stroke="#e2e2e5" stroke-width="1.2"/><path d="M612.4 45.6 h9 v4.6 h-10.6 q1.6-1.6 1.6-4.6z" fill="#e8b050"/><path d="M609 51 q6 1.6 14 0" fill="none" stroke="#4a84d8" stroke-width="1.8"/><path d="M637.4 51 l1-3 7.4-7.4 2 2 -7.4 7.4z" fill="none" stroke="#e2e2e5" stroke-width="1.2"/><path d="M645 39.4 l3-3 q1.4-1 2.6.2 q1.2 1.2.2 2.6 l-3 3z" fill="#6a8fd0" stroke="#4a84d8" stroke-width=".8"/><path d="M650.4 47.4 v5 M647.9 49.9 h5" stroke="#8ad060" stroke-width="1.6"/><rect x="665" y="36.8" width="4.6" height="4.6" fill="none" stroke="#4a84d8" stroke-width="1"/><rect x="666.5" y="38.3" width="1.6" height="1.6" fill="#4a84d8"/><rect x="675" y="36.8" width="4.6" height="4.6" fill="none" stroke="#4a84d8" stroke-width="1"/><rect x="676.5" y="38.3" width="1.6" height="1.6" fill="#4a84d8"/><path d="M669.6 39.6 l1 10.6 2.6-2.8 2.6 4.4 1.8-1 -2.6-4.4 3.8-.6z" fill="#2b2b35" stroke="#f4f4f4" stroke-width="1.1" stroke-linejoin="round"/><rect x="693.6" y="36.8" width="4.6" height="4.6" fill="none" stroke="#c8c8cc" stroke-width="1"/><rect x="703.6" y="36.8" width="4.6" height="4.6" fill="none" stroke="#4a84d8" stroke-width="1"/><rect x="705.1" y="38.3" width="1.6" height="1.6" fill="#4a84d8"/><rect x="693.6" y="46.6" width="4.6" height="4.6" fill="none" stroke="#4a84d8" stroke-width="1"/><rect x="695.1" y="48.1" width="1.6" height="1.6" fill="#4a84d8"/><path d="M707.6 41.4 c-2.4 0-3.8 1.7-3.8 3.7 c0 1.8 1.2 2.6 1.9 4 v1.2 h3.8 v-1.2 c.7-1.4 1.9-2.2 1.9-4 c0-2-1.4-3.7-3.8-3.7z" fill="#b8b8bc"/><rect x="706.4" y="50.8" width="2.4" height="2.2" fill="#ddd"/><rect x="721.6" y="36.8" width="4.6" height="4.6" fill="none" stroke="#4a84d8" stroke-width="1"/><rect x="723.1" y="38.3" width="1.6" height="1.6" fill="#4a84d8"/><rect x="731.6" y="36.8" width="4.6" height="4.6" fill="none" stroke="#c8c8cc" stroke-width="1"/><rect x="721.6" y="46.8" width="4.6" height="4.6" fill="none" stroke="#c8c8cc" stroke-width="1"/><path d="M726.6 39.6 l1 10.6 2.6-2.8 2.6 4.4 1.8-1 -2.6-4.4 3.8-.6z" fill="#2b2b35" stroke="#f4f4f4" stroke-width="1.1" stroke-linejoin="round"/><rect x="749.6" y="36.8" width="4.6" height="4.6" fill="none" stroke="#4a84d8" stroke-width="1"/><rect x="751.1" y="38.3" width="1.6" height="1.6" fill="#4a84d8"/><rect x="759.6" y="36.8" width="4.6" height="4.6" fill="none" stroke="#4a84d8" stroke-width="1"/><rect x="761.1" y="38.3" width="1.6" height="1.6" fill="#4a84d8"/><rect x="749.6" y="46.6" width="4.6" height="4.6" fill="none" stroke="#4a84d8" stroke-width="1"/><rect x="751.1" y="48.1" width="1.6" height="1.6" fill="#4a84d8"/><path d="M761.6 41.4 c-2.4 0-3.8 1.7-3.8 3.7 c0 1.8 1.2 2.6 1.9 4 v1.2 h3.8 v-1.2 c.7-1.4 1.9-2.2 1.9-4 c0-2-1.4-3.7-3.8-3.7z" fill="#f0a030"/><rect x="760.4" y="50.8" width="2.4" height="2.2" fill="#ddd"/><rect x="785.6" y="37" width="15" height="14.4" fill="none" stroke="#e2e2e5" stroke-width="1.3"/><rect x="785.6" y="36.4" width="15" height="3.4" fill="#4a84d8"/><path d="M791.8 39.8 v11.6 M794 42.8 h5 M794 45.4 h5 M794 48 h5" stroke="#e2e2e5" stroke-width="1.3"/><rect x="787.6" y="42.4" width="1.8" height="1.8" fill="#4a84d8"/><rect x="787.6" y="46.6" width="1.8" height="1.8" fill="#4a84d8"/><path d="M813.6 49 l9-10.6 q2.4-1.6 3.6 1 l3 3.6 -9.4 7.6 q-3.4 1.6-6.2-1.6z" fill="#b0b8d0" stroke="#e2e2e5" stroke-width="1.1" stroke-linejoin="round"/><path d="M818 45 l7-6.5" stroke="#4a84d8" stroke-width="1.6"/><circle cx="848" cy="42.6" r="3.6" fill="none" stroke="#e2e2e5" stroke-width="2.6"/><circle cx="853.7" cy="43.8" r="1.25" fill="#e2e2e5"/><circle cx="851.2" cy="47.4" r="1.25" fill="#e2e2e5"/><circle cx="846.8" cy="48.3" r="1.25" fill="#e2e2e5"/><circle cx="843.2" cy="45.8" r="1.25" fill="#e2e2e5"/><circle cx="842.3" cy="41.4" r="1.25" fill="#e2e2e5"/><circle cx="844.8" cy="37.8" r="1.25" fill="#e2e2e5"/><circle cx="849.2" cy="36.9" r="1.25" fill="#e2e2e5"/><circle cx="852.8" cy="39.4" r="1.25" fill="#e2e2e5"/><rect x="851.4" y="46.4" width="6.8" height="5.8" fill="#2b2b35" stroke="#e2e2e5" stroke-width="1.1"/><path d="M851.4 48.6 h6.8 M854.8 48.6 v3.6" stroke="#e2e2e5" stroke-width=".9"/><rect x="871.6" y="36.8" width="12" height="14.8" fill="none" stroke="#e2e2e5" stroke-width="1.5"/><path d="M874 40.4 h7.4 M874 44.2 h7.4 M874 48 h7.4" stroke="#e2e2e5" stroke-width="1.1"/><rect x="875" y="39.2" width="1.8" height="2.4" fill="#e2e2e5"/><rect x="878.6" y="43" width="1.8" height="2.4" fill="#e2e2e5"/><rect x="875.4" y="46.8" width="1.8" height="2.4" fill="#e2e2e5"/><rect x="898" y="38.6" width="15.6" height="11" fill="none" stroke="#e2e2e5" stroke-width="1.4"/><path d="M900.6 40.8 l3.6 3 M900.4 40.6 h2.6 M900.4 40.6 v2.4" stroke="#c8c8d0" stroke-width="1.3"/><path d="M907 44.2 l3.8 3.2 M911 47.6 h-2.6 M911 47.6 v-2.4" stroke="#8aa6dc" stroke-width="1.3"/><circle cx="942" cy="44" r="7.600" fill="none" stroke="#5070b4" stroke-width="1.300"/><path d="M947.4 51.6 h2.2 v-2.2z" fill="#d8d8e0"/><rect x="11" y="62" width="33" height="33" fill="#3f86e6"/><rect x="17" y="67.6" width="20.4" height="19.4" rx="2" fill="#3a7ce0"/><path d="M21.800 82.600 L26.600 73 L28.200 77.600 M27.900 82.400 V80 Q27.900 77.800 30 77.800 Q32.100 77.800 32.100 80 V82.400" fill="none" stroke="#e0f4ee" stroke-width="2.100" stroke-linejoin="round"/><path d="M44 90.6 V95 H39.6z" fill="#e8f0f0"/><rect x="163.70000000000002" y="97" width="1.2" height="100" fill="#1e1f25"/><rect x="469.4" y="97" width="1.2" height="100" fill="#1e1f25"/><rect x="739.6999999999999" y="97" width="1.2" height="100" fill="#1e1f25"/><rect x="913.9" y="97" width="1.2" height="100" fill="#1e1f25"/><rect x="1159.7" y="97" width="1.2" height="100" fill="#1e1f25"/><rect x="4" y="123.0" width="2" height="2" fill="#f0f0f0"/><rect x="4" y="126.9" width="2" height="2" fill="#f0f0f0"/><rect x="4" y="130.8" width="2" height="2" fill="#f0f0f0"/><rect x="4" y="134.7" width="2" height="2" fill="#f0f0f0"/><rect x="4" y="138.6" width="2" height="2" fill="#f0f0f0"/><circle cx="54.8" cy="113.4" r="11.2" fill="#252a3e"/><circle cx="54.8" cy="113.4" r="11.2" fill="none" stroke="#e2e2e5" stroke-width="2.2"/><path d="M46.6 121.6 l-9.4 9.4" stroke="#bcbcc0" stroke-width="3" stroke-linecap="round"/><path d="M54.800 105 v17 M46.300 113.400 h17" stroke="#5a8ad8" stroke-width="1.100"/><path d="M52.6 107.4 L55 104.6 l2.4 2.8z M52.6 119.6 L55 122.4 l2.4-2.8z M48.9 111.1 L46.1 113.5 l2.8 2.4z M61.1 111.1 l2.8 2.4 -2.8 2.4z" fill="#4a84d8"/><circle cx="91" cy="108.6" r="5.9" fill="none" stroke="#e2e2e5" stroke-width="1.4"/><path d="M86.5 113.1 l-4.2 4.2" stroke="#bcbcc0" stroke-width="1.7999999999999998" stroke-linecap="round"/><circle cx="114.7" cy="108.6" r="5.9" fill="none" stroke="#e2e2e5" stroke-width="1.4"/><path d="M110.2 113.1 l-4.2 4.2" stroke="#bcbcc0" stroke-width="1.7999999999999998" stroke-linecap="round"/><circle cx="139" cy="108.6" r="5.9" fill="none" stroke="#e2e2e5" stroke-width="1.4"/><path d="M134.5 113.1 l-4.2 4.2" stroke="#bcbcc0" stroke-width="1.7999999999999998" stroke-linecap="round"/><circle cx="91" cy="130.5" r="5.9" fill="none" stroke="#e2e2e5" stroke-width="1.4"/><path d="M86.5 135.0 l-4.2 4.2" stroke="#bcbcc0" stroke-width="1.7999999999999998" stroke-linecap="round"/><circle cx="114.7" cy="130.5" r="5.9" fill="none" stroke="#e2e2e5" stroke-width="1.4"/><path d="M110.2 135.0 l-4.2 4.2" stroke="#bcbcc0" stroke-width="1.7999999999999998" stroke-linecap="round"/><circle cx="139" cy="130.5" r="5.9" fill="none" stroke="#e2e2e5" stroke-width="1.4"/><path d="M134.5 135.0 l-4.2 4.2" stroke="#bcbcc0" stroke-width="1.7999999999999998" stroke-linecap="round"/><circle cx="91" cy="152.8" r="5.9" fill="none" stroke="#e2e2e5" stroke-width="1.4"/><path d="M86.5 157.3 l-4.2 4.2" stroke="#bcbcc0" stroke-width="1.7999999999999998" stroke-linecap="round"/><circle cx="114.7" cy="152.8" r="5.9" fill="none" stroke="#e2e2e5" stroke-width="1.4"/><path d="M110.2 157.3 l-4.2 4.2" stroke="#bcbcc0" stroke-width="1.7999999999999998" stroke-linecap="round"/><circle cx="139" cy="152.8" r="5.9" fill="none" stroke="#e2e2e5" stroke-width="1.4"/><path d="M134.5 157.3 l-4.2 4.2" stroke="#bcbcc0" stroke-width="1.7999999999999998" stroke-linecap="round"/><path d="M112.10000000000001 108.6 h5.2 M114.7 106.0 v5.2" stroke="#e2e2e5" stroke-width="1.3"/><path d="M136.4 108.6 h5.2" stroke="#e2e2e5" stroke-width="1.3"/><path d="M93.6 129.5 a2.6 2.6 0 1 0 -2.6 3.4 M88.8 131.1 l2 2 M88.8 133.5 h2.4" fill="none" stroke="#e2e2e5" stroke-width="1.1"/><path d="M111.7 128.5 h6 v4 h-6z M108.2 127.1 h3.4 M109.9 125.4 v3.4 M116.10000000000001 133.7 h3.4 M117.8 132.0 v3.4" fill="none" stroke="#e2e2e5" stroke-width="1.1"/><path d="M136.8 127.5 h2.6 l2 2 v3.8 h-4.6z" fill="none" stroke="#e2e2e5" stroke-width="1.2"/><path d="M94.2 152.8 h-6 M90.6 150.20000000000002 l-2.8 2.6 2.8 2.6" fill="none" stroke="#e2e2e5" stroke-width="1.5"/><rect x="113.3" y="151.4" width="2.8" height="2.8" fill="#e2e2e5"/><path d="M135.8 152.8 h6 M139.4 150.20000000000002 l2.8 2.6 -2.8 2.6" fill="none" stroke="#e2e2e5" stroke-width="1.5"/><path d="M226.600 111 q-3.400 7.600 5.400 10.200 q9 2.600 18 0 q8.800-2.600 5.400-10.200" fill="none" stroke="#4a7cc8" stroke-width="1.300"/><path d="M246.800 104.200 q-4.600-4.400-8.400-.6 q-5.600 6.600-2.600 19 q2.600 9.600 6.800 9.800 q3 0 5-3.600" fill="none" stroke="#4a7cc8" stroke-width="1.300"/><path d="M224.200 112.600 l1.600-4.600 3.800 3.200z M257.800 112.600 l-1.600-4.600 -3.800 3.200z M244 102.400 l4.800-.4 -.8 4.600z M244.800 129.600 l4.400-2.200 .2 4.800z" fill="#4a84d8" stroke="#4a84d8" stroke-width=".8" stroke-linejoin="round"/><path d="M308.6 110.6 h13" stroke="#e2e2e5" stroke-width="1"/><path d="M319.6 106 a5 5 0 1 0 0 9.4" fill="none" stroke="#4a84d8" stroke-width="1.3"/><path d="M317.6 104.2 l3 1.8 -3 1.6z M317.6 113.6 l3 1.8 -3 1.6z" fill="#4a84d8"/><path d="M315 125.6 v13" stroke="#e2e2e5" stroke-width="1"/><path d="M311.4 129.6 q-4.4 3.6 0 6.6 M318.6 129.6 q4.4 3.6 0 6.6" fill="none" stroke="#4a84d8" stroke-width="1.3"/><path d="M310 135 l2.6 2.2 -3.2 .6z M320 135 l-2.6 2.2 3.2 .6z" fill="#4a84d8"/><path d="M310.4 150.4 a5.6 5.6 0 1 0 9.2 0" fill="none" stroke="#4a84d8" stroke-width="1.3"/><path d="M308.6 151.6 l1.6-3.4 2.2 3z M321.4 151.6 l-1.6-3.4 -2.2 3z" fill="#4a84d8"/><rect x="313.9" y="152.5" width="2.2" height="2.2" fill="none" stroke="#e2e2e5" stroke-width=".8"/><path d="M354.500 132.300 L349.500 124.500 Q346 120.400 345.600 118.400 Q345.600 116.200 347.800 116.800 L351.400 120.800 L351 110.600 Q351 108 352.800 108 Q354.500 108 354.700 110.600 L355.200 116.600 L355.300 108.200 Q355.500 105.600 357.300 105.700 Q359 105.800 359.100 108.200 L359.500 116 L360.100 108.800 Q360.500 106.400 362.100 106.600 Q363.800 106.800 363.700 109.200 L363.500 116.800 L364.900 111.800 Q365.500 109.800 367.100 110.300 Q368.600 110.900 368.300 112.800 L368 114.600 Q371.200 113.400 370.600 116.400 L365.600 132.300 Z" fill="none" stroke="#e2e2e5" stroke-width="1.300" stroke-linejoin="round"/><path d="M365 103 l7.600 7.800 M364.200 107.200 v-5 h5 M373.400 106.600 v5 h-5" fill="none" stroke="#5a94e4" stroke-width="2"/><circle cx="427" cy="113" r="11.2" fill="none" stroke="#e2e2e5" stroke-width="2.2"/><path d="M418.8 121.2 l-9.4 9.4" stroke="#bcbcc0" stroke-width="3" stroke-linecap="round"/><path d="M427 105.4 v15.2" stroke="#4a84d8" stroke-width="1.4"/><path d="M424.400 107.800 L427 104.600 l2.600 3.200z M424.400 118.200 L427 121.400 l2.600-3.200z" fill="#4a84d8"/><path d="M489 113 q8-8.4 16 0 q-8 8.400-16 0z" fill="#dfe6f4" stroke="#7fa2e0" stroke-width=".8"/><circle cx="497" cy="112.7" r="3.3" fill="#3f6fc8"/><circle cx="497" cy="112.7" r="1.3" fill="#1a2a50"/><rect x="509.5" y="102.700" width="199.500" height="21.400" fill="#44464f" stroke="#36373f" stroke-width="1"/><circle cx="522" cy="113.300" r="5.900" fill="none" stroke="#b8b8bc" stroke-width="1"/><circle cx="522" cy="113.300" r="2.900" fill="none" stroke="#b8b8bc" stroke-width="1"/><path d="M693.600 112.800 l5 4.800 5-4.800" fill="none" stroke="#d8d8dc" stroke-width="1.200"/><path d="M489 133.5 q8-8.4 16 0 q-8 8.400-16 0z" fill="#dfe6f4" stroke="#7fa2e0" stroke-width=".8"/><circle cx="497" cy="133.2" r="3.3" fill="#3f6fc8"/><circle cx="497" cy="133.2" r="1.3" fill="#1a2a50"/><rect x="499.600" y="138.200" width="6" height="6" fill="#4a84d8"/><rect x="501" y="138.200" width="3.200" height="2" fill="#dfe6f4"/><rect x="501.400" y="141.800" width="2.400" height="2.400" fill="#dfe6f4"/><path d="M514.200 129 h8.600 l4 4 v10.800 h-12.600z M522.800 129 v4 h4" fill="none" stroke="#e2e2e5" stroke-width="1.200"/><rect x="516.600" y="132" width="3.400" height="3" fill="none" stroke="#e2e2e5" stroke-width="1"/><rect x="516.600" y="138" width="7.800" height="3" fill="none" stroke="#e2e2e5" stroke-width="1"/><rect x="537" y="131" width="13.200" height="13" fill="#8c8c90"/><rect x="561.300" y="131.600" width="13.400" height="12.400" fill="#123828" stroke="#d0d0d4" stroke-width="1.100"/><circle cx="568" cy="137.800" r="3.600" fill="none" stroke="#3faa6a" stroke-width="1.400"/><circle cx="568" cy="137.800" r="1.200" fill="#3a6ac0"/><path d="M585.400 144.200 V128.600 l5.600 3 v12.400 M585.400 136.600 h9.600 M595 144 v-10 M585.400 144.200 h16 M590.800 141 l10 3.200 M590.800 134 l6.400 4 v6" fill="none" stroke="#e2e2e5" stroke-width="1.100"/><rect x="489.600" y="153.800" width="15" height="9.800" rx="1" fill="none" stroke="#e2e2e5" stroke-width="1.300"/><path d="M492 153.800 v-1.400 h4 v1.400" fill="none" stroke="#e2e2e5" stroke-width="1.100"/><circle cx="498.200" cy="158.700" r="2.900" fill="none" stroke="#e2e2e5" stroke-width="1.200"/><circle cx="499.200" cy="157.700" r=".8" fill="#e2e2e5"/><rect x="513.600" y="150.800" width="15" height="14.800" fill="none" stroke="#a8a8ac" stroke-width="1"/><rect x="515.800" y="153" width="4.200" height="4.200" fill="none" stroke="#a8a8ac" stroke-width="1"/><rect x="515.800" y="159.400" width="4.200" height="4.200" fill="none" stroke="#a8a8ac" stroke-width="1"/><rect x="522.200" y="153" width="4.400" height="10.600" fill="none" stroke="#a8a8ac" stroke-width="1"/><rect x="536.600" y="150.600" width="15.400" height="15.400" rx="1.500" fill="#3f7fe0"/><rect x="550.400" y="152" width="1.800" height="13" fill="#2f5fb0"/><rect x="561.300" y="152.600" width="13.400" height="12.800" fill="#182c20" stroke="#c8c8cc" stroke-width="1.100"/><path d="M564 162 q2-7 7-6.400" fill="none" stroke="#3faa5a" stroke-width="1.600"/><circle cx="573.600" cy="164.400" r="1.700" fill="#e05070"/><path d="M586.400 151.800 v11.400 h7 M589.800 152.600 q-1.600 4 0 8" fill="none" stroke="#e2e2e5" stroke-width="1.200"/><rect x="591.800" y="150.600" width="8.600" height="7.600" fill="none" stroke="#e2e2e5" stroke-width="1.200"/><path d="M594.600 150.600 v4.600 h3.400 v-4.600" fill="none" stroke="#e2e2e5" stroke-width="1"/><rect x="586" y="163" width="14.800" height="3.200" fill="#4a84d8"/><rect x="772.400" y="101.400" width="31.600" height="31" fill="none" stroke="#d2d2d6" stroke-width="1.200"/><rect x="777.400" y="105.600" width="8.200" height="8.600" fill="none" stroke="#d2d2d6" stroke-width="1"/><rect x="777.400" y="119.400" width="8.200" height="8.600" fill="none" stroke="#d2d2d6" stroke-width="1"/><rect x="790.400" y="105.600" width="8.600" height="22.400" fill="none" stroke="#d2d2d6" stroke-width="1"/><path d="M848.200 101.600 h15.800 l9.200 9.200 v21.400 h-25z M864 101.600 v9.200 h9.200" fill="none" stroke="#d2d2d6" stroke-width="1.500"/><rect x="852.600" y="107.400" width="7.200" height="7.200" fill="#a4a4a8"/><rect x="852.600" y="120.200" width="16.400" height="7.400" fill="#a4a4a8"/><rect x="951.600" y="101.600" width="24" height="31" fill="none" stroke="#e2e2e5" stroke-width="1.400"/><path d="M956.600 108.400 h13.600 M956.600 117.600 h13.600 M956.600 126.400 h13.600" stroke="#e2e2e5" stroke-width="1.200"/><path d="M958.600 105.600 v5.600 M967.400 114.800 v5.600 M961 123.600 v5.600" stroke="#4a84d8" stroke-width="1.800"/><rect x="1019.200" y="102.200" width="30.800" height="4.600" fill="#8c8c90"/><path d="M1050.400 120.600 V101.500 H1018.600 V132.200 H1030.400 M1018.600 107.500 H1050.400" fill="none" stroke="#ececf0" stroke-width="1.300"/><path d="M1029.800 108 V132.200 M1018.600 115.300 H1033 M1018.600 123.400 H1035" fill="none" stroke="#c8c8cc" stroke-width="1.100"/><path d="M1093.400 102 h4 v1.600 h6.400 v7.400 h-10.400z M1093.400 104.800 h10.400 M1098 111 v11.600 h8 M1106.800 117.600 h6 v2 h11.800 v13 h-17.800z M1106.800 121.600 h17.800" fill="none" stroke="#9c9ca2" stroke-width="1.100"/><rect x="1179.200" y="106" width="15.600" height="6.600" fill="none" stroke="#e2e2e5" stroke-width="1.100"/><rect x="1179.200" y="106" width="15.600" height="2.600" fill="#4a84d8"/><rect x="1179.200" y="114" width="15.600" height="6.600" fill="none" stroke="#e2e2e5" stroke-width="1.100"/><rect x="1179.200" y="114" width="15.600" height="2.600" fill="#4a84d8"/><rect x="1180" y="129.600" width="5.600" height="13" fill="none" stroke="#e2e2e5" stroke-width="1.100"/><rect x="1188.200" y="129.600" width="5.600" height="13" fill="none" stroke="#e2e2e5" stroke-width="1.100"/><path d="M1180 129.600 h5.600 M1188.200 129.600 h5.600" stroke="#4a84d8" stroke-width="1.400"/><path d="M1184 159.400 h-4.600 v-8.800 h9.600 v3" fill="none" stroke="#e2e2e5" stroke-width="1.100"/><rect x="1183.600" y="155.200" width="11" height="10.200" fill="#2a2b33" stroke="#e2e2e5" stroke-width="1.100"/><rect x="1184" y="155.600" width="10.200" height="2.200" fill="#4a84d8"/><path d="M1179.400 151.400 h9.600" stroke="#8aa6dc" stroke-width="1.400"/><path d="M63.400000000000006 204.29999999999998 L74.0 214.9 M74.0 204.29999999999998 L63.400000000000006 214.9" stroke="#c8c8cc" stroke-width="1.3"/><path d="M176.1 204.29999999999998 L186.70000000000002 214.9 M186.70000000000002 204.29999999999998 L176.1 214.9" stroke="#dcdce0" stroke-width="1.3"/><path d="M208 209.800 h11.400 M213.700 204 v11.600" stroke="#f0f0f0" stroke-width="1.400"/><rect x="1893.4" y="202.400" width="2" height="2" fill="#f0f0f0"/><rect x="1896.9" y="202.400" width="2" height="2" fill="#f0f0f0"/><rect x="1900.4" y="202.400" width="2" height="2" fill="#f0f0f0"/><rect x="1903.9" y="202.400" width="2" height="2" fill="#f0f0f0"/><rect x="1907.4" y="202.400" width="2" height="2" fill="#f0f0f0"/><path d="M1899.200 244.600 v-2.400 q-5.800-3.600-5.800-8.600 q0-8.600 9-8.600 q9 0 9 8.600 q0 5-5.800 8.600 v2.400z" fill="none" stroke="#c4c4c8" stroke-width="1.200"/><path d="M1899.400 242.400 h6 M1899.400 244.800 h6 M1899.800 247 h5.200 M1900.800 249 h3.200" stroke="#c4c4c8" stroke-width="1"/><path d="M1890 284 h24 M1890 292.200 h24 M1890 300 h24" stroke="#c4c4c8" stroke-width="1.100"/><circle cx="1896" cy="284" r="2.400" fill="#1b1b1f" stroke="#c4c4c8" stroke-width="1.100"/><circle cx="1909" cy="292.200" r="2.400" fill="#1b1b1f" stroke="#c4c4c8" stroke-width="1.100"/><circle cx="1901" cy="300" r="2.400" fill="#1b1b1f" stroke="#c4c4c8" stroke-width="1.100"/><path d="M1902 335.400 l11.600 6 -11.600 6 -11.600-6z M1890.400 346.800 l11.600 6 11.600-6 M1890.400 352.400 l11.600 6 11.600-6" fill="none" stroke="#c4c4c8" stroke-width="1.100" stroke-linejoin="round"/><path d="M1899.200 397 v11 q0 2.800 2.800 2.800 q2.800 0 2.800-2.800 v-12.600 q0-4.600-4.400-4.600 q-4.400 0-4.400 4.600 v13 q0 5.600 6 5.600 q6 0 6-5.600 v-9.400" fill="none" stroke="#c4c4c8" stroke-width="1.100" transform="translate(0,-.5) scale(1)"/><rect x="1890.400" y="445.400" width="23.200" height="22.600" fill="none" stroke="#c4c4c8" stroke-width="1.100"/><path d="M1890.400 445.400 l23.200 22.600 M1898 445.400 v7.400 M1903.200 445.400 v12.600 M1908.400 445.400 v17.600 M1898 452.800 h15.600 M1903.200 458 h10.400 M1908.400 463 h5.200 M1893.400 453.400 v11.600 h12z M1896 459.600 v2.800 h2.800z" fill="none" stroke="#c4c4c8" stroke-width="1"/><path d="M1890.600 555.600 h12.400 v5.600 h-12.400z M1893.400 558.400 h6.800 M1896.600 561.200 v13.400 h4.800 M1896.600 566.600 h4.800 M1901.400 563.600 h12.200 v5.800 h-12.200z M1901.400 571.800 h12.200 v5.800 h-12.200z" fill="none" stroke="#c4c4c8" stroke-width="1.100"/><path d="M1895.600 630.600 q-5.200 0-5.200-4.600 q0-4 4.200-4.600 q1-7.600 7.600-7.600 q5.600 0 7 5.400 q4.600.6 4.600 5.600 q0 5.800-5.600 5.800z" fill="none" stroke="#c4c4c8" stroke-width="1.100"/><path d="M1902 627.600 v-7 M1899.200 623 l2.800-2.800 2.800 2.800" fill="none" stroke="#c4c4c8" stroke-width="1.100"/><path d="M6.400 915.600 v11.600" stroke="#f2f2f4" stroke-width="1.600"/><path d="M14.600 915.400 v12 l-6.600-6z" fill="#f2f2f4"/><path d="M35 915.400 v12 l-6.600-6z" fill="#f2f2f4"/><path d="M48.400 915.400 v12 l6.600-6z" fill="#f2f2f4"/><path d="M76.600 915.600 v11.600" stroke="#f2f2f4" stroke-width="1.600"/><path d="M68.400 915.400 v12 l6.600-6z" fill="#f2f2f4"/><rect x="88.400" y="915.600" width="10.600" height="10.600" fill="none" stroke="#f2f2f4" stroke-width="1.200"/><path d="M90.200 918.600 h7 M90.200 921 h7 M90.200 923.400 h7" stroke="#f2f2f4" stroke-width="1.300"/><path d="M272.400 921.600 h6.600 M275.700 918.300 v6.600" stroke="#d0d0d4" stroke-width="1.100"/><path d="M1.600 940.400 l6.400 6.400 M8 940.400 l-6.400 6.400" stroke="#e8e8e8" stroke-width="1.300"/><rect x="4" y="983.0" width="2" height="2" fill="#f0f0f0"/><rect x="4" y="986.9" width="2" height="2" fill="#f0f0f0"/><rect x="4" y="990.8" width="2" height="2" fill="#f0f0f0"/><rect x="4" y="994.7" width="2" height="2" fill="#f0f0f0"/><rect x="4" y="998.6" width="2" height="2" fill="#f0f0f0"/><path d="M1863 949.200 l4.500-4.600 4.500 4.600" fill="none" stroke="#505054" stroke-width="1.900"/><path d="M1863 1018 l4.500 4.600 4.500-4.600" fill="none" stroke="#505054" stroke-width="1.900"/><path d="M1872.800 1068 h7.400 l-3.700 3.900z" fill="#f4f4f4"/><rect x="1916" y="1070" width="2" height="2" fill="#b0b0b4"/><rect x="1913" y="1073" width="2" height="2" fill="#b0b0b4"/><rect x="1916" y="1073" width="2" height="2" fill="#b0b0b4"/><rect x="1910" y="1076" width="2" height="2" fill="#b0b0b4"/><rect x="1913" y="1076" width="2" height="2" fill="#b0b0b4"/><rect x="1916" y="1076" width="2" height="2" fill="#b0b0b4"/></svg>
<div id="txt" style="position:absolute;left:0;top:0;width:1920px;height:1080px;will-change:transform">
<span class="t" style="left:27.17px;top:3.75px;font-size:14.3px;color:#0a0a0a;line-height:20px;transform:scaleX(1.0058);transform-origin:0 0;">BricsCAD Ultimate (NOT FOR RESALE License) - [latha 2d.dwg]</span>
<span class="t" style="left:413.56px;top:35.87px;font-size:12.5px;color:#e8e8ea;line-height:20px;">0</span>
<span class="t" style="left:938.80px;top:34.07px;font-size:12.5px;color:#f0f0f0;line-height:20px;">?</span>
<span class="t" style="left:68.14px;top:68.94px;font-size:17.5px;color:#e6e6e8;line-height:20px;transform:scaleX(1.0637);transform-origin:0 0;">Home</span>
<span class="t" style="left:167.83px;top:68.94px;font-size:17.5px;color:#e6e6e8;line-height:20px;transform:scaleX(1.0698);transform-origin:0 0;">Insert</span>
<span class="t" style="left:255.30px;top:68.94px;font-size:17.5px;color:#e6e6e8;line-height:20px;transform:scaleX(1.0272);transform-origin:0 0;">Annotate</span>
<span class="t" style="left:351.78px;top:68.94px;font-size:17.5px;color:#e6e6e8;line-height:20px;transform:scaleX(1.0325);transform-origin:0 0;">Parametric</span>
<span class="t" style="left:480.94px;top:68.94px;font-size:17.5px;color:#e6e6e8;line-height:20px;transform:scaleX(0.9701);transform-origin:0 0;">View</span>
<span class="t" style="left:566.83px;top:68.94px;font-size:17.5px;color:#e6e6e8;line-height:20px;transform:scaleX(0.9980);transform-origin:0 0;">Manage</span>
<span class="t" style="left:670.44px;top:68.94px;font-size:17.5px;color:#e6e6e8;line-height:20px;transform:scaleX(1.0538);transform-origin:0 0;">Output</span>
<span class="t" style="left:34.18px;top:134.53px;font-size:12.6px;color:#d4d4d7;line-height:20px;transform:scaleX(1.1097);transform-origin:0 0;">Zoom</span>
<span class="t" style="left:28.71px;top:152.53px;font-size:12.6px;color:#d4d4d7;line-height:20px;transform:scaleX(1.0880);transform-origin:0 0;">Extents</span>
<span class="t" style="left:211.28px;top:134.53px;font-size:12.6px;color:#d4d4d7;line-height:20px;transform:scaleX(1.0227);transform-origin:0 0;">Real-Time</span>
<span class="t" style="left:181.64px;top:152.53px;font-size:12.6px;color:#d4d4d7;line-height:20px;transform:scaleX(1.0610);transform-origin:0 0;">Constrained Sphere</span>
<span class="t" style="left:330.19px;top:134.53px;font-size:12.6px;color:#d4d4d7;line-height:20px;transform:scaleX(1.0120);transform-origin:0 0;">Real-Time</span>
<span class="t" style="left:347.36px;top:152.53px;font-size:12.6px;color:#d4d4d7;line-height:20px;transform:scaleX(1.0441);transform-origin:0 0;">Pan</span>
<span class="t" style="left:394.18px;top:134.53px;font-size:12.6px;color:#d4d4d7;line-height:20px;transform:scaleX(1.0245);transform-origin:0 0;">Real-Time</span>
<span class="t" style="left:405.79px;top:152.53px;font-size:12.6px;color:#d4d4d7;line-height:20px;transform:scaleX(1.1032);transform-origin:0 0;">Zoom</span>
<span class="t" style="left:758.20px;top:134.53px;font-size:12.6px;color:#d4d4d7;line-height:20px;transform:scaleX(1.0935);transform-origin:0 0;">Viewports</span>
<span class="t" style="left:822.98px;top:134.53px;font-size:12.6px;color:#d4d4d7;line-height:20px;transform:scaleX(1.0167);transform-origin:0 0;">Paper Space</span>
<span class="t" style="left:843.70px;top:152.53px;font-size:12.6px;color:#d4d4d7;line-height:20px;transform:scaleX(1.0262);transform-origin:0 0;">Views</span>
<span class="t" style="left:931.92px;top:134.53px;font-size:12.6px;color:#d4d4d7;line-height:20px;transform:scaleX(1.0821);transform-origin:0 0;">Properties</span>
<span class="t" style="left:999.52px;top:134.53px;font-size:12.6px;color:#d4d4d7;line-height:20px;transform:scaleX(1.0771);transform-origin:0 0;">Parameters</span>
<span class="t" style="left:1017.43px;top:152.53px;font-size:12.6px;color:#d4d4d7;line-height:20px;transform:scaleX(1.0743);transform-origin:0 0;">Panel</span>
<span class="t" style="left:1074.93px;top:134.53px;font-size:12.6px;color:#d4d4d7;line-height:20px;transform:scaleX(1.0720);transform-origin:0 0;">Mechanical</span>
<span class="t" style="left:1083.93px;top:152.53px;font-size:12.6px;color:#d4d4d7;line-height:20px;transform:scaleX(1.0711);transform-origin:0 0;">Browser</span>
<span class="t" style="left:537.17px;top:103.54px;font-size:12.3px;color:#e4e4e8;line-height:20px;font-weight:bold;transform:scaleX(1.0398);transform-origin:0 0;">Top</span>
<span class="t" style="left:603.24px;top:126.53px;font-size:12.6px;color:#d4d4d7;line-height:20px;transform:scaleX(1.0620);transform-origin:0 0;">Perspective</span>
<span class="t" style="left:603.43px;top:148.53px;font-size:12.6px;color:#d4d4d7;line-height:20px;transform:scaleX(1.0693);transform-origin:0 0;">Match Perspective</span>
<span class="t" style="left:538.13px;top:127.84px;font-size:10px;color:#f4f4f4;line-height:20px;font-weight:bold;transform:scaleX(0.8622);transform-origin:0 0;">2D</span>
<span class="t" style="left:538.23px;top:149.53px;font-size:10px;color:#f4f4f4;line-height:20px;font-weight:bold;transform:scaleX(0.9026);transform-origin:0 0;">3D</span>
<span class="t" style="left:1197.03px;top:104.63px;font-size:12.6px;color:#d4d4d7;line-height:20px;transform:scaleX(1.0794);transform-origin:0 0;">Tile Horizontally</span>
<span class="t" style="left:1197.04px;top:126.63px;font-size:12.6px;color:#d4d4d7;line-height:20px;transform:scaleX(1.0463);transform-origin:0 0;">Tile Vertically</span>
<span class="t" style="left:1196.98px;top:148.63px;font-size:12.6px;color:#d4d4d7;line-height:20px;transform:scaleX(0.9913);transform-origin:0 0;">Cascade</span>
<span class="t" style="left:1031.56px;top:109.10px;font-size:24px;color:#f2f2f4;line-height:20px;font-style:italic;font-family:'Liberation Serif',serif;transform:scaleX(1.7415);transform-origin:0 0;">f</span>
<span class="t" style="left:1041.86px;top:116.69px;font-size:17.5px;color:#f2f2f4;line-height:20px;font-style:italic;font-family:'Liberation Serif',serif;transform:scaleX(1.0583);transform-origin:0 0;">x</span>
<span class="t" style="left:68.27px;top:175.50px;font-size:13px;color:#dcdcde;line-height:20px;font-weight:bold;transform:scaleX(1.1474);transform-origin:0 0;">Zoom</span>
<span class="t" style="left:287.27px;top:175.50px;font-size:13px;color:#dcdcde;line-height:20px;font-weight:bold;transform:scaleX(1.1485);transform-origin:0 0;">Navigate</span>
<span class="t" style="left:586.73px;top:175.50px;font-size:13px;color:#dcdcde;line-height:20px;font-weight:bold;transform:scaleX(1.0925);transform-origin:0 0;">Views</span>
<span class="t" style="left:793.53px;top:175.50px;font-size:13px;color:#dcdcde;line-height:20px;font-weight:bold;transform:scaleX(1.1275);transform-origin:0 0;">Viewports</span>
<span class="t" style="left:1015.10px;top:175.50px;font-size:13px;color:#dcdcde;line-height:20px;font-weight:bold;transform:scaleX(1.1028);transform-origin:0 0;">Panels</span>
<span class="t" style="left:1209.26px;top:175.50px;font-size:13px;color:#dcdcde;line-height:20px;font-weight:bold;transform:scaleX(1.1599);transform-origin:0 0;">Interface</span>
<span class="t" style="left:14.73px;top:199.79px;font-size:13.3px;color:#b4b4b8;line-height:20px;transform:scaleX(1.0096);transform-origin:0 0;">Start</span>
<span class="t" style="left:96.22px;top:199.55px;font-size:14px;color:#f4f4f6;line-height:20px;font-weight:bold;transform:scaleX(1.0423);transform-origin:0 0;">latha 2d*</span>
<span class="t" style="left:1890.80px;top:500.47px;font-size:15.5px;color:#d4d4d8;line-height:20px;font-weight:bold;font-style:italic;font-family:'Liberation Serif',serif;transform:scaleX(1.2923);transform-origin:0 0;">f</span>
<span class="t" style="left:1899.88px;top:501.38px;font-size:12.5px;color:#d0d0d4;line-height:20px;font-weight:bold;font-style:italic;font-family:'Liberation Serif',serif;transform:scaleX(1.1094);transform-origin:0 0;">(x)</span>
<span class="t" style="left:96.74px;top:800.69px;font-size:16.2px;color:#1c1c1c;line-height:20px;transform:scaleX(1.0140);transform-origin:0 0;">W</span>
<span class="t" style="left:109.74px;top:911.40px;font-size:13px;color:#c0bcc8;line-height:20px;">Model</span>
<span class="t" style="left:152.34px;top:911.40px;font-size:13px;color:#f6f6f8;line-height:20px;font-weight:bold;transform:scaleX(1.0639);transform-origin:0 0;">Layout1</span>
<span class="t" style="left:215.57px;top:911.40px;font-size:13px;color:#c8c8cc;line-height:20px;transform:scaleX(0.9725);transform-origin:0 0;">Layout2</span>
<span class="t" style="left:17.14px;top:944.78px;font-size:15.1px;color:#f2f2f2;line-height:20px;font-family:'Liberation Mono',monospace;white-space:pre;">Viewports:  Set first corner or [ON/OFf/Lock/Fit/create 2 viewports/create 3 viewports/create 4 viewports/Object/Polygonal]:</span>
<span class="t" style="left:16.79px;top:964.78px;font-size:15.1px;color:#f2f2f2;line-height:20px;font-family:'Liberation Mono',monospace;letter-spacing:0.030px;">Cancel</span>
<span class="t" style="left:17.38px;top:984.78px;font-size:15.1px;color:#f2f2f2;line-height:20px;font-family:'Liberation Mono',monospace;">:</span>
<span class="t" style="left:16.79px;top:1004.78px;font-size:15.1px;color:#f2f2f2;line-height:20px;font-family:'Liberation Mono',monospace;letter-spacing:0.030px;">Cancel</span>
<span class="t" style="left:12.32px;top:1033.58px;font-size:15.1px;color:#c6c6c8;line-height:20px;font-style:italic;font-family:'Liberation Mono',monospace;letter-spacing:-0.047px;white-space:pre;">: Enter command</span>
<span class="t" style="left:2.38px;top:1058.30px;font-size:13px;color:#f2f2f2;line-height:20px;transform:scaleX(0.9644);transform-origin:0 0;">Ready</span>
<span class="t" style="left:883.58px;top:1058.70px;font-size:13px;color:#ececee;line-height:20px;transform:scaleX(0.9953);transform-origin:0 0;">299.7081, 122.7827, 0</span>
<span class="t" style="left:1022.04px;top:1058.70px;font-size:13px;color:#ececee;line-height:20px;transform:scaleX(0.9954);transform-origin:0 0;">Standard</span>
<span class="t" style="left:1082.49px;top:1058.70px;font-size:13px;color:#ececee;line-height:20px;transform:scaleX(0.9110);transform-origin:0 0;">STANDARD</span>
<span class="t" style="left:1154.42px;top:1058.70px;font-size:13px;color:#ececee;line-height:20px;transform:scaleX(1.0140);transform-origin:0 0;">Drafting</span>
<span class="t" style="left:1211.69px;top:1058.70px;font-size:13px;color:#55565d;line-height:20px;transform:scaleX(0.9009);transform-origin:0 0;">SNAP</span>
<span class="t" style="left:1254.65px;top:1058.70px;font-size:13px;color:#55565d;line-height:20px;transform:scaleX(0.8878);transform-origin:0 0;">GRID</span>
<span class="t" style="left:1290.68px;top:1058.70px;font-size:13px;color:#f4f4f6;line-height:20px;transform:scaleX(0.9218);transform-origin:0 0;">ORTHO</span>
<span class="t" style="left:1341.46px;top:1058.70px;font-size:13px;color:#55565d;line-height:20px;transform:scaleX(0.8860);transform-origin:0 0;">POLAR</span>
<span class="t" style="left:1388.68px;top:1058.70px;font-size:13px;color:#f4f4f6;line-height:20px;transform:scaleX(0.8650);transform-origin:0 0;">ESNAP</span>
<span class="t" style="left:1435.52px;top:1058.70px;font-size:13px;color:#f4f4f6;line-height:20px;transform:scaleX(0.8605);transform-origin:0 0;">STRACK</span>
<span class="t" style="left:1489.55px;top:1058.70px;font-size:13px;color:#55565d;line-height:20px;transform:scaleX(0.9846);transform-origin:0 0;">LWT</span>
<span class="t" style="left:1523.57px;top:1058.70px;font-size:13px;color:#ececee;line-height:20px;transform:scaleX(0.9741);transform-origin:0 0;">P:Layout1</span>
<span class="t" style="left:1589.06px;top:1058.70px;font-size:13px;color:#55565d;line-height:20px;transform:scaleX(1.0061);transform-origin:0 0;">1:1</span>
<span class="t" style="left:1615.70px;top:1058.70px;font-size:13px;color:#f4f4f6;line-height:20px;transform:scaleX(0.8511);transform-origin:0 0;">DUCS</span>
<span class="t" style="left:1655.69px;top:1058.70px;font-size:13px;color:#55565d;line-height:20px;transform:scaleX(0.8591);transform-origin:0 0;">DYN</span>
<span class="t" style="left:1687.30px;top:1058.70px;font-size:13px;color:#55565d;line-height:20px;transform:scaleX(0.8837);transform-origin:0 0;">QUAD</span>
<span class="t" style="left:1728.26px;top:1058.70px;font-size:13px;color:#f4f4f6;line-height:20px;transform:scaleX(0.8889);transform-origin:0 0;">RT</span>
<span class="t" style="left:1752.09px;top:1058.70px;font-size:13px;color:#f4f4f6;line-height:20px;transform:scaleX(0.8564);transform-origin:0 0;">HKA</span>
<span class="t" style="left:1783.65px;top:1058.70px;font-size:13px;color:#55565d;line-height:20px;transform:scaleX(0.8963);transform-origin:0 0;">LOCKUI</span>
<span class="t" style="left:1834.39px;top:1058.70px;font-size:13px;color:#ececee;line-height:20px;transform:scaleX(0.9492);transform-origin:0 0;">None</span>
</div>
</body>
</html>
